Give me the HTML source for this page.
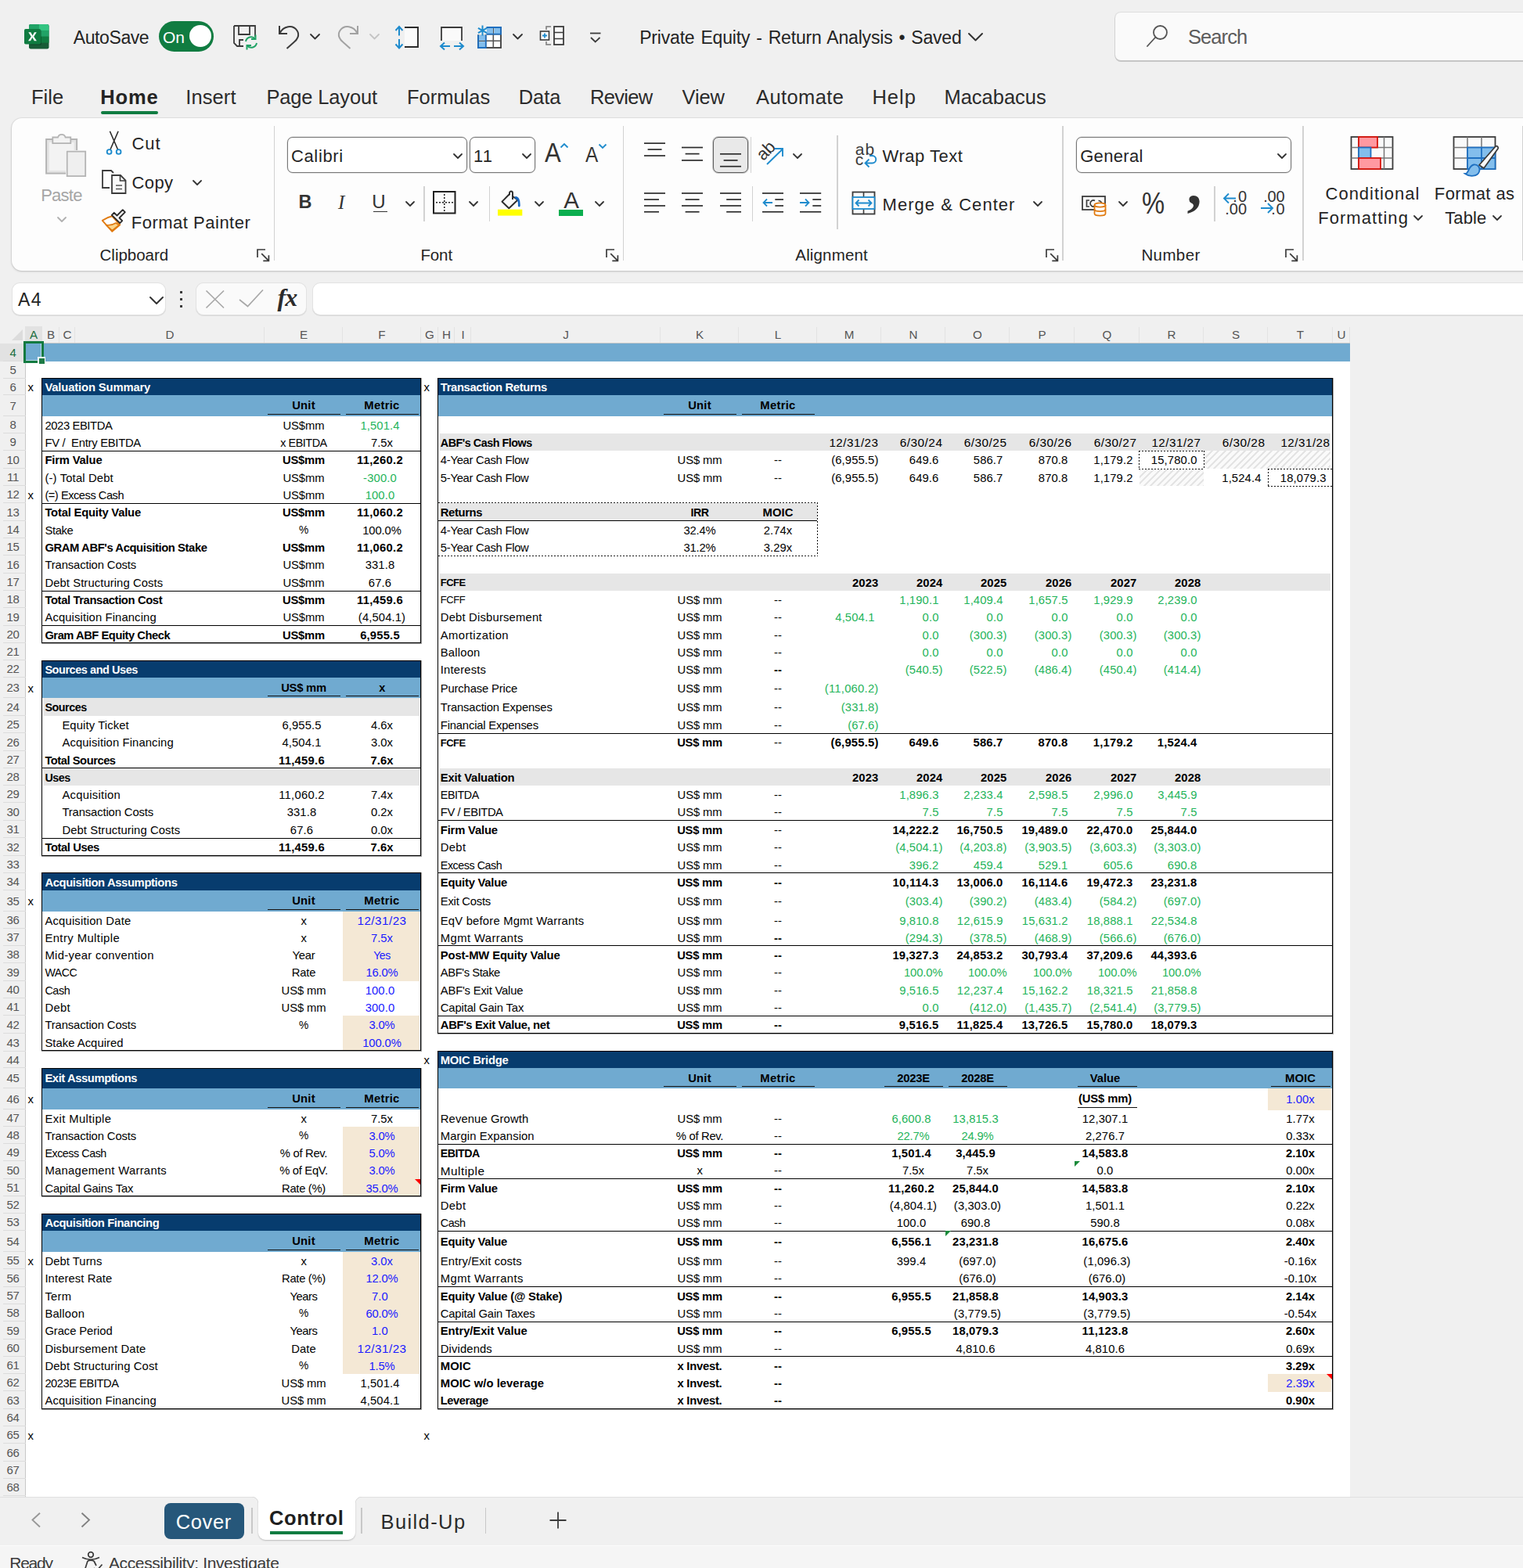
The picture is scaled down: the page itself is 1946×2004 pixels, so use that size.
<!DOCTYPE html>
<html lang="en"><head><meta charset="utf-8"><title>Private Equity - Return Analysis</title>
<style>
html,body{margin:0;padding:0;}
body{width:1946px;height:2004px;overflow:hidden;background:#f0f0f0;font-family:"Liberation Sans",sans-serif;}
#pg{position:relative;width:1946px;height:2004px;overflow:hidden;}
.a{position:absolute;}
.t{position:absolute;white-space:nowrap;}
.c{font-size:14.8px;color:#000;white-space:nowrap;box-sizing:border-box;overflow:visible;padding-top:1px;}
.l{text-align:left;padding-left:3.4px;}
.l2{text-align:left;padding-left:2.8px;}
.m{text-align:center;}
.r{text-align:right;padding-right:3.5px;}
.nc{text-align:center;}
.nc.p{padding-right:5px;}
.nr{text-align:right;padding-right:3.5px;}
.nr.p{padding-right:8.5px;}
.b{font-weight:bold;}
.w{color:#fff;padding-top:1px;}
.u{padding-top:0;}
.g{color:#1fb45a;}
.bl{color:#1a1aff;}
.u::after{content:"";position:absolute;left:3.5px;right:3.5px;bottom:2px;height:1.5px;background:#111;}
.fr{border:1.5px solid #111;box-sizing:border-box;}
.ch{top:417px;height:21px;line-height:21px;text-align:center;font-size:15.2px;color:#555;}
.rh{left:0;width:33px;text-align:center;box-sizing:border-box;font-size:15px;letter-spacing:-.4px;color:#555;}
.sel{color:#1b6e3f;}
.tri-r{width:0;height:0;border-top:7px solid #f00;border-left:7px solid transparent;}
.tri-g{width:0;height:0;border-top:7px solid #1a8a3a;border-right:7px solid transparent;}
</style></head>
<body><div id="pg">
<div class="a" style="left:0px;top:0px;width:1946px;height:408px;background:#f0f0f0;"></div><svg class="a" style="left:31px;top:31px" width="32" height="32" viewBox="0 0 32 32"><rect x="6" y="0" width="25.500" height="31.500" rx="2.200" fill="#185c37"/>
<path d="M8.200 0h10.300v7.900H6V2.200A2.200 2.200 0 0 1 8.200 0z" fill="#21a366"/><path d="M18.500 0h10.800a2.200 2.200 0 0 1 2.200 2.200v5.700h-13z" fill="#33c481"/>
<rect x="6" y="7.900" width="12.500" height="7.900" fill="#107c41"/><rect x="18.500" y="7.900" width="13" height="7.900" fill="#21a366"/>
<rect x="6" y="15.800" width="12.500" height="7.900" fill="#185c37"/><rect x="18.500" y="15.800" width="13" height="7.900" fill="#107c41"/>
<rect x="7" y="7" width="15" height="19.500" rx="1.500" fill="rgba(0,0,0,.22)"/>
<rect x="0" y="6" width="21" height="19.500" rx="1.800" fill="#107c41"/>
<path d="M5.300 10.300h3.100l2.200 4.200 2.300-4.200h2.900l-3.600 5.500 3.700 5.500h-3.100l-2.400-4.300-2.400 4.300H5l3.800-5.500z" fill="#fff"/></svg><div class="t" style="left:93.8px;top:36.5px;font-size:23px;line-height:23px;letter-spacing:-0.41px;color:#242424;">AutoSave</div><div class="a" style="left:203px;top:27px;width:70px;height:39px;background:#107c41;border-radius:20px;"></div><div class="a" style="left:242px;top:32px;width:28px;height:28px;background:#fff;border-radius:14px;"></div><div class="t" style="left:208.1px;top:37.2px;font-size:21px;line-height:21px;letter-spacing:-0.18px;color:#fff;">On</div><svg class="a" style="left:297px;top:31px" width="34" height="34" viewBox="0 0 34 34"><path d="M2 2h27v14M2 2v22l4 4h8" fill="none" stroke="#3b3b3b" stroke-width="1.8"/>
<path d="M8 2v11h14V2M9 28V20h5" fill="none" stroke="#3b3b3b" stroke-width="1.8"/>
<path d="M17 22a7 7 0 0 1 12-3.5M31 24a7 7 0 0 1-12 3.5" fill="none" stroke="#21a366" stroke-width="2"/>
<path d="M29.5 13.5v5.5h-5.5M18.500 32.500v-5.500h5.500" fill="none" stroke="#21a366" stroke-width="2"/></svg><svg class="a" style="left:354px;top:30px" width="32" height="34" viewBox="0 0 32 34"><path d="M3 3v10h10" fill="none" stroke="#3b3b3b" stroke-width="2"/><path d="M3.500 12.500C8 3 20 1 25.500 9c4 6 0 12-4 15l-9 8" fill="none" stroke="#3b3b3b" stroke-width="2"/></svg><svg class="a" style="left:395px;top:42.25px" width="15" height="9.5" viewBox="0 0 15 9.5"><path d="M2 2 L7.5 7.5 L13 2" fill="none" stroke="#333" stroke-width="1.8" stroke-linecap="round" stroke-linejoin="round"/></svg><svg class="a" style="left:428px;top:30px" width="32" height="34" viewBox="0 0 32 34"><path d="M29 3v10h-10" fill="none" stroke="#a2a2a2" stroke-width="2"/><path d="M28.500 12.500C24 3 12 1 6.500 9c-4 6 0 12 4 15l9 8" fill="none" stroke="#a2a2a2" stroke-width="2"/></svg><svg class="a" style="left:470.5px;top:42.25px" width="15" height="9.5" viewBox="0 0 15 9.5"><path d="M2 2 L7.5 7.5 L13 2" fill="none" stroke="#c4c4c4" stroke-width="1.8" stroke-linecap="round" stroke-linejoin="round"/></svg><svg class="a" style="left:503px;top:32px" width="34" height="32" viewBox="0 0 34 32"><path d="M14 3h17v25H14" fill="#fafafa" stroke="#2b2b2b" stroke-width="1.900"/>
<path d="M7 2v11.500M2.500 7l4.500-5 4.500 5M7 18v11.500M2.500 24.500l4.500 5 4.500-5" fill="none" stroke="#1e8bcd" stroke-width="2"/></svg><svg class="a" style="left:560px;top:32px" width="35" height="33" viewBox="0 0 35 33"><path d="M4 20V3h26v17" fill="#fafafa" stroke="#3b3b3b" stroke-width="1.8"/>
<path d="M3 27h12M20 27h12M8 22.500l-5 4.500 5 4.500M27 22.500l5 4.500-5 4.500" fill="none" stroke="#1e8bcd" stroke-width="2"/></svg><svg class="a" style="left:609px;top:31px" width="33" height="33" viewBox="0 0 33 33"><rect x="2" y="4" width="29" height="26" fill="#fff" stroke="#3b3b3b" stroke-width="1.800"/>
<path d="M2 12.700h29M2 21.300h29M11.700 4v26M21.300 4v26" stroke="#555" stroke-width="1.600"/>
<rect x="0" y="0" width="13" height="13.500" fill="#f0f0f0"/>
<rect x="13" y="4.800" width="8" height="7.500" fill="#83beec"/><rect x="22.300" y="4.800" width="8" height="7.500" fill="#83beec"/>
<path d="M12.500 4h18.500v8.700H12.500" fill="none" stroke="#1e6fc0" stroke-width="1.800"/>
<rect x="2.800" y="14" width="8" height="6.800" fill="#83beec"/><rect x="2.800" y="22.200" width="8" height="7" fill="#83beec"/>
<path d="M11.700 13.500V30H2V13.500" fill="none" stroke="#1e6fc0" stroke-width="1.800"/>
<path d="M7.500 1.500v13M1.900 4.800l11.200 6.400M13.100 4.800L1.900 11.200" stroke="#1e8bcd" stroke-width="2"/></svg><svg class="a" style="left:653.5px;top:42.25px" width="15" height="9.5" viewBox="0 0 15 9.5"><path d="M2 2 L7.5 7.5 L13 2" fill="none" stroke="#333" stroke-width="1.8" stroke-linecap="round" stroke-linejoin="round"/></svg><svg class="a" style="left:689px;top:32px" width="33" height="28" viewBox="0 0 33 28"><rect x="19" y="2" width="12" height="23" fill="#fafafa" stroke="#3b3b3b" stroke-width="1.8"/><path d="M19 9.500h12M19 17.500h12" stroke="#3b3b3b" stroke-width="1.6"/>
<path d="M15 2H9v4M15 25H9v-4" fill="none" stroke="#777" stroke-width="1.5"/>
<rect x="1.500" y="8" width="11" height="11" fill="#fafafa" stroke="#3b3b3b" stroke-width="1.6"/><path d="M7 10.500v6M4 13.500h6" stroke="#1e8bcd" stroke-width="1.8"/></svg><svg class="a" style="left:752px;top:40px" width="18" height="16" viewBox="0 0 18 16"><path d="M2 2.500h13.500" stroke="#3b3b3b" stroke-width="1.8"/><path d="M3 8l5.700 5.500L14.500 8" fill="none" stroke="#3b3b3b" stroke-width="1.8"/></svg><div class="t" style="left:817.2px;top:36.8px;font-size:23px;line-height:23px;letter-spacing:-0.19px;color:#242424;word-spacing:1.8px;">Private Equity - Return Analysis • Saved</div><svg class="a" style="left:1236px;top:40.75px" width="21" height="12.5" viewBox="0 0 21 12.5"><path d="M2 2 L10.5 10.5 L19 2" fill="none" stroke="#333" stroke-width="2" stroke-linecap="round" stroke-linejoin="round"/></svg><div class="a" style="left:1425px;top:16px;width:535px;height:61px;background:#fafafa;border-radius:7px;box-shadow:0 1.500px 0 0.500px #c6c6c6, 0 0 0 1px #dedede;"></div><svg class="a" style="left:1463px;top:30px" width="32" height="32" viewBox="0 0 32 32"><circle cx="19.500" cy="11.500" r="8.500" fill="none" stroke="#555" stroke-width="1.8"/><path d="M13.500 17.500L3 29" stroke="#555" stroke-width="1.8" stroke-linecap="round"/></svg><div class="t" style="left:1517.9px;top:34.8px;font-size:25.5px;line-height:25.5px;letter-spacing:-0.88px;color:#5c5c5c;">Search</div><div class="t" style="left:40.0px;top:111.8px;font-size:25.5px;line-height:25.5px;letter-spacing:-0.00px;color:#2b2b2b;">File</div><div class="t" style="left:128.3px;top:111.8px;font-size:25.5px;line-height:25.5px;letter-spacing:0.87px;color:#242424;font-weight:bold;">Home</div><div class="t" style="left:237.3px;top:111.8px;font-size:25.5px;line-height:25.5px;letter-spacing:0.08px;color:#2b2b2b;">Insert</div><div class="t" style="left:340.4px;top:111.8px;font-size:25.5px;line-height:25.5px;letter-spacing:-0.15px;color:#2b2b2b;">Page Layout</div><div class="t" style="left:520.0px;top:111.8px;font-size:25.5px;line-height:25.5px;letter-spacing:-0.01px;color:#2b2b2b;">Formulas</div><div class="t" style="left:662.7px;top:111.8px;font-size:25.5px;line-height:25.5px;letter-spacing:-0.04px;color:#2b2b2b;">Data</div><div class="t" style="left:753.9px;top:111.8px;font-size:25.5px;line-height:25.5px;letter-spacing:-0.67px;color:#2b2b2b;">Review</div><div class="t" style="left:871.5px;top:111.8px;font-size:25.5px;line-height:25.5px;letter-spacing:-0.13px;color:#2b2b2b;">View</div><div class="t" style="left:966.0px;top:111.8px;font-size:25.5px;line-height:25.5px;letter-spacing:0.41px;color:#2b2b2b;">Automate</div><div class="t" style="left:1114.4px;top:111.8px;font-size:25.5px;line-height:25.5px;letter-spacing:1.05px;color:#2b2b2b;">Help</div><div class="t" style="left:1206.5px;top:111.8px;font-size:25.5px;line-height:25.5px;letter-spacing:-0.03px;color:#2b2b2b;">Macabacus</div><div class="a" style="left:129.3px;top:142px;width:72.5px;height:3.5px;background:#107c41;border-radius:2px;"></div><div class="a" style="left:15px;top:151px;width:1955px;height:194.5px;background:#fdfdfd;border-radius:13px;box-shadow:0 1px 3px rgba(0,0,0,.18),0 0 0 1px #e4e4e4;"></div><svg class="a" style="left:57px;top:168px" width="56" height="60" viewBox="0 0 56 60"><rect x="2.100" y="10" width="39" height="43.600" fill="#e4e4e4" stroke="#b4b4b4" stroke-width="2"/>
<rect x="6" y="14" width="31.500" height="36" fill="#f3f3f3"/>
<path d="M10.300 15.200V7.500h6.700a5 5 0 0 1 9.600 0h6.700v7.700z" fill="#f3f3f3" stroke="#b4b4b4" stroke-width="1.800"/>
<rect x="27.100" y="24" width="26" height="34" fill="#fdfdfd"/>
<rect x="28.700" y="25.600" width="23.500" height="31.500" fill="#efefef" stroke="#b4b4b4" stroke-width="1.800"/></svg><div class="t" style="left:52.2px;top:239.2px;font-size:22px;line-height:22px;letter-spacing:-0.77px;color:#a6a6a6;">Paste</div><svg class="a" style="left:71.5px;top:275.5px" width="14" height="9" viewBox="0 0 14 9"><path d="M2 2 L7 7 L12 2" fill="none" stroke="#b0b0b0" stroke-width="1.8" stroke-linecap="round" stroke-linejoin="round"/></svg><svg class="a" style="left:134px;top:166px" width="24" height="34" viewBox="0 0 24 34"><path d="M6.400 1.800L16.600 25.200M17.100 1.800L6.900 25.200" stroke="#2b2b2b" stroke-width="1.600" fill="none"/>
<circle cx="5.600" cy="28" r="2.900" fill="#fdfdfd" stroke="#1e8bcd" stroke-width="1.900"/><circle cx="17.600" cy="28" r="2.900" fill="#fdfdfd" stroke="#1e8bcd" stroke-width="1.900"/></svg><div class="t" style="left:168.5px;top:173.0px;font-size:22px;line-height:22px;letter-spacing:0.91px;color:#242424;">Cut</div><svg class="a" style="left:129px;top:216px" width="34" height="34" viewBox="0 0 34 34"><path d="M11 24H2V2h11l3 3" fill="none" stroke="#3b3b3b" stroke-width="1.8"/>
<path d="M14 8h11l6.500 6.500V31H14z" fill="#fafafa" stroke="#3b3b3b" stroke-width="1.8"/><path d="M24.500 8v7h7" fill="none" stroke="#3b3b3b" stroke-width="1.6"/>
<path d="M19 21h8M19 25.500h8" stroke="#555" stroke-width="1.6"/></svg><div class="t" style="left:168.5px;top:223.3px;font-size:22px;line-height:22px;letter-spacing:0.38px;color:#242424;">Copy</div><svg class="a" style="left:245px;top:229.2px" width="14" height="9" viewBox="0 0 14 9"><path d="M2 2 L7 7 L12 2" fill="none" stroke="#333" stroke-width="1.8" stroke-linecap="round" stroke-linejoin="round"/></svg><svg class="a" style="left:129px;top:266px" width="34" height="32" viewBox="0 0 34 32"><path d="M14.300 10.300C9 11.500 5 13.500 1.800 15.800L14.300 29.900 24.300 21.300z" fill="#fff" stroke="#e07a10" stroke-width="1.900" stroke-linejoin="round"/>
<path d="M6.500 21.500c4 0.800 8 0.200 12.500-2.500l4 2.500-8.700 7z" fill="#fbd58b" stroke="#e07a10" stroke-width="1.500" stroke-linejoin="round"/>
<path d="M13.800 8.800l3-3 3.700 3.700 7.300-7.300 3 3-7.300 7.300 3.700 3.700-3 3z" fill="#fff" stroke="#2b2b2b" stroke-width="1.900" stroke-linejoin="round"/></svg><div class="t" style="left:167.8px;top:273.9px;font-size:22px;line-height:22px;letter-spacing:0.50px;color:#242424;">Format Painter</div><div class="t" style="left:127.6px;top:315.9px;font-size:20.5px;line-height:20.5px;letter-spacing:-0.03px;color:#242424;">Clipboard</div><svg class="a" style="left:328px;top:318px" width="17" height="17" viewBox="0 0 17 17"><path d="M1 11V1h10" fill="none" stroke="#3b3b3b" stroke-width="1.7"/><path d="M6.2 6.2l9 9M8.3 15.400h7.100V8.300" fill="none" stroke="#3b3b3b" stroke-width="1.7"/></svg><div class="a" style="left:349.65px;top:161px;width:1.5px;height:172px;background:#d2d2d2;"></div><div class="a" style="left:367px;top:175px;width:230px;height:45.5px;border:1px solid #777;box-shadow:0 0 0 .5px rgba(120,120,120,.35);border-radius:7px;box-sizing:border-box;background:#fff;"></div><div class="t" style="left:371.9px;top:188.9px;font-size:22px;line-height:22px;letter-spacing:0.67px;color:#242424;">Calibri</div><svg class="a" style="left:577.7px;top:194.5px" width="14" height="9" viewBox="0 0 14 9"><path d="M2 2 L7 7 L12 2" fill="none" stroke="#333" stroke-width="1.8" stroke-linecap="round" stroke-linejoin="round"/></svg><div class="a" style="left:600px;top:175px;width:84px;height:45.5px;border:1px solid #777;box-shadow:0 0 0 .5px rgba(120,120,120,.35);border-radius:7px;box-sizing:border-box;background:#fff;"></div><div class="t" style="left:605.0px;top:188.9px;font-size:22px;line-height:22px;letter-spacing:1.03px;color:#242424;">11</div><svg class="a" style="left:665.5px;top:194.5px" width="14" height="9" viewBox="0 0 14 9"><path d="M2 2 L7 7 L12 2" fill="none" stroke="#333" stroke-width="1.8" stroke-linecap="round" stroke-linejoin="round"/></svg><div class="t" style="left:696.3px;top:178.2px;font-size:34.5px;line-height:34.5px;color:#333;transform:scaleX(.9);transform-origin:0 0;">A</div><svg class="a" style="left:715px;top:182.3px" width="12" height="8" viewBox="0 0 12 8"><path d="M1.500 6.500L6 2l4.500 4.500" fill="none" stroke="#1e8bcd" stroke-width="1.8"/></svg><div class="t" style="left:748px;top:184.5px;font-size:27px;line-height:27px;color:#333;transform:scaleX(.9);transform-origin:0 0;">A</div><svg class="a" style="left:763.5px;top:183.3px" width="12" height="8" viewBox="0 0 12 8"><path d="M1.500 1.500L6 6l4.500-4.500" fill="none" stroke="#1e8bcd" stroke-width="1.8"/></svg><div class="t" style="left:381.5px;top:247.1px;font-size:23.5px;line-height:23.5px;letter-spacing:0.00px;color:#333;font-weight:bold;">B</div><div class="t" style="left:432.0px;top:245.8px;font-size:25px;line-height:25px;letter-spacing:0.00px;color:#333;font-style:italic;font-family:'Liberation Serif',serif;">I</div><div class="t" style="left:475.2px;top:245.7px;font-size:24px;line-height:24px;letter-spacing:0.00px;color:#333;">U</div><div class="a" style="left:477px;top:269.8px;width:17.7px;height:1.7px;background:#333;"></div><svg class="a" style="left:516.5px;top:256px" width="14" height="9" viewBox="0 0 14 9"><path d="M2 2 L7 7 L12 2" fill="none" stroke="#333" stroke-width="1.8" stroke-linecap="round" stroke-linejoin="round"/></svg><div class="a" style="left:541.45px;top:237.5px;width:1.5px;height:45.5px;background:#d2d2d2;"></div><svg class="a" style="left:552px;top:243px" width="32" height="32" viewBox="0 0 32 32"><rect x="2" y="2" width="27.500" height="27.500" fill="#fafafa" stroke="#1f1f1f" stroke-width="2"/>
<path d="M15.750 5v22M5 15.750h22" stroke="#1f1f1f" stroke-width="1.500" stroke-dasharray="2 2"/></svg><svg class="a" style="left:598px;top:256px" width="14" height="9" viewBox="0 0 14 9"><path d="M2 2 L7 7 L12 2" fill="none" stroke="#333" stroke-width="1.8" stroke-linecap="round" stroke-linejoin="round"/></svg><div class="a" style="left:624.95px;top:237.5px;width:1.5px;height:45.5px;background:#d2d2d2;"></div><svg class="a" style="left:634px;top:243px" width="36" height="34" viewBox="0 0 36 34"><path d="M7.500 14.700L17 5l10.500 7.500L16.300 23.300z" fill="#fafafa" stroke="#2b2b2b" stroke-width="1.900" stroke-linejoin="round"/>
<path d="M17 6V3.500a2 2 0 0 1 4 0V12" fill="#fafafa" stroke="#2b2b2b" stroke-width="1.900"/>
<path d="M25 9.500c3.500 0.500 4.500 4 4.300 10.500" fill="none" stroke="#1767c2" stroke-width="2.800" stroke-linecap="round"/>
<rect x="2" y="24.700" width="31.300" height="7.900" fill="#ffff00"/></svg><svg class="a" style="left:681.5px;top:256px" width="14" height="9" viewBox="0 0 14 9"><path d="M2 2 L7 7 L12 2" fill="none" stroke="#333" stroke-width="1.8" stroke-linecap="round" stroke-linejoin="round"/></svg><div class="t" style="left:720.3px;top:240.8px;font-size:29.5px;line-height:29.5px;letter-spacing:0.00px;color:#333;">A</div><div class="a" style="left:714px;top:268px;width:31px;height:7.6px;background:#0bae4f;"></div><svg class="a" style="left:759.3px;top:256px" width="14" height="9" viewBox="0 0 14 9"><path d="M2 2 L7 7 L12 2" fill="none" stroke="#333" stroke-width="1.8" stroke-linecap="round" stroke-linejoin="round"/></svg><div class="t" style="left:537.4px;top:315.6px;font-size:20.5px;line-height:20.5px;letter-spacing:-0.11px;color:#242424;">Font</div><svg class="a" style="left:774px;top:318px" width="17" height="17" viewBox="0 0 17 17"><path d="M1 11V1h10" fill="none" stroke="#3b3b3b" stroke-width="1.7"/><path d="M6.2 6.2l9 9M8.3 15.400h7.100V8.300" fill="none" stroke="#3b3b3b" stroke-width="1.7"/></svg><div class="a" style="left:795.95px;top:161px;width:1.5px;height:172px;background:#d2d2d2;"></div><svg class="a" style="left:822.6px;top:150px" width="27.2" height="130" viewBox="0 0 27.2 130"><path d="M0 33.1H27.2" stroke="#2b2b2b" stroke-width="1.7"/><path d="M4.624 41H22.576" stroke="#2b2b2b" stroke-width="1.7"/><path d="M0 49H27.2" stroke="#2b2b2b" stroke-width="1.7"/></svg><svg class="a" style="left:871px;top:150px" width="27.2" height="130" viewBox="0 0 27.2 130"><path d="M0 38.5H27.2" stroke="#2b2b2b" stroke-width="1.7"/><path d="M4.624 46.6H22.576" stroke="#2b2b2b" stroke-width="1.7"/><path d="M0 54.9H27.2" stroke="#2b2b2b" stroke-width="1.7"/></svg><div class="a" style="left:910.6px;top:175px;width:45.4px;height:45.5px;border:1px solid #5e5e5e;box-shadow:0 0 0 1px rgba(90,90,90,.28);border-radius:7px;box-sizing:border-box;background:#e9e9e9;"></div><svg class="a" style="left:919.6px;top:150px" width="27.2" height="130" viewBox="0 0 27.2 130"><path d="M0 46.8H27.2" stroke="#2b2b2b" stroke-width="1.7"/><path d="M4.624 54.9H22.576" stroke="#2b2b2b" stroke-width="1.7"/><path d="M0 62.7H27.2" stroke="#2b2b2b" stroke-width="1.7"/></svg><div class="a" style="left:958.75px;top:175px;width:1.5px;height:45.5px;background:#d2d2d2;"></div><svg class="a" style="left:968px;top:180px" width="36" height="34" viewBox="0 0 36 34"><path d="M12 30L31.500 11M22 10h10v10" fill="none" stroke="#1e8bcd" stroke-width="1.900"/></svg><div class="t" style="left:967.5px;top:182.5px;font-size:22px;line-height:22px;color:#333;transform:rotate(-45deg);transform-origin:0 100%;letter-spacing:-0.5px;margin-left:10px;margin-top:4px">ab</div><svg class="a" style="left:1011.7px;top:194.5px" width="14" height="9" viewBox="0 0 14 9"><path d="M2 2 L7 7 L12 2" fill="none" stroke="#333" stroke-width="1.8" stroke-linecap="round" stroke-linejoin="round"/></svg><div class="a" style="left:1069.45px;top:173px;width:1.5px;height:119.6px;background:#d2d2d2;"></div><div class="t" style="left:1092.7px;top:179.5px;font-size:21px;line-height:21px;letter-spacing:1.25px;color:#3b3b3b;">ab</div><div class="t" style="left:1092.7px;top:193.2px;font-size:21px;line-height:21px;letter-spacing:0.00px;color:#3b3b3b;">c</div><svg class="a" style="left:1103px;top:198px" width="18" height="18" viewBox="0 0 18 18"><path d="M8 1h3.500a4.500 4.500 0 0 1 0 9.500H3M7.500 5.500L2.500 10.500l5 5" fill="none" stroke="#1e8bcd" stroke-width="1.900"/></svg><div class="t" style="left:1127.6px;top:188.9px;font-size:22px;line-height:22px;letter-spacing:0.50px;color:#242424;">Wrap Text</div><svg class="a" style="left:822.6px;top:150px" width="27.2" height="130" viewBox="0 0 27.2 130"><path d="M0 97H27.2" stroke="#2b2b2b" stroke-width="1.7"/><path d="M0 105H19.04" stroke="#2b2b2b" stroke-width="1.7"/><path d="M0 113H27.2" stroke="#2b2b2b" stroke-width="1.7"/><path d="M0 120.8H19.04" stroke="#2b2b2b" stroke-width="1.7"/></svg><svg class="a" style="left:871px;top:150px" width="27.2" height="130" viewBox="0 0 27.2 130"><path d="M0 97H27.2" stroke="#2b2b2b" stroke-width="1.7"/><path d="M4.624 105H22.576" stroke="#2b2b2b" stroke-width="1.7"/><path d="M0 113H27.2" stroke="#2b2b2b" stroke-width="1.7"/><path d="M4.624 120.8H22.576" stroke="#2b2b2b" stroke-width="1.7"/></svg><svg class="a" style="left:919.6px;top:150px" width="27.2" height="130" viewBox="0 0 27.2 130"><path d="M0 97H27.2" stroke="#2b2b2b" stroke-width="1.7"/><path d="M8.16 105H27.2" stroke="#2b2b2b" stroke-width="1.7"/><path d="M0 113H27.2" stroke="#2b2b2b" stroke-width="1.7"/><path d="M8.16 120.8H27.2" stroke="#2b2b2b" stroke-width="1.7"/></svg><div class="a" style="left:960.65px;top:237.5px;width:1.5px;height:45.5px;background:#d2d2d2;"></div><svg class="a" style="left:974px;top:150px" width="27.2" height="130" viewBox="0 0 27.2 130"><path d="M0 97H27.2" stroke="#2b2b2b" stroke-width="1.7"/><path d="M16.32 105H27.2" stroke="#2b2b2b" stroke-width="1.7"/><path d="M16.32 113H27.2" stroke="#2b2b2b" stroke-width="1.7"/><path d="M0 120.8H27.2" stroke="#2b2b2b" stroke-width="1.7"/></svg><svg class="a" style="left:974px;top:253px" width="14" height="12" viewBox="0 0 14 12"><path d="M13 6H1.500M6 1.500L1.500 6l4.500 4.500" fill="none" stroke="#1e8bcd" stroke-width="1.800"/></svg><svg class="a" style="left:1022.4px;top:150px" width="27.2" height="130" viewBox="0 0 27.2 130"><path d="M0 97H27.2" stroke="#2b2b2b" stroke-width="1.7"/><path d="M16.32 105H27.2" stroke="#2b2b2b" stroke-width="1.7"/><path d="M16.32 113H27.2" stroke="#2b2b2b" stroke-width="1.7"/><path d="M0 120.8H27.2" stroke="#2b2b2b" stroke-width="1.7"/></svg><svg class="a" style="left:1022.4px;top:253px" width="14" height="12" viewBox="0 0 14 12"><path d="M0 6h11.500M7 1.500l4.500 4.500-4.500 4.500" fill="none" stroke="#1e8bcd" stroke-width="1.800"/></svg><svg class="a" style="left:1087.6px;top:243.6px" width="31" height="31" viewBox="0 0 31 31"><rect x="1.500" y="1.500" width="28" height="28" fill="#fafafa" stroke="#3b3b3b" stroke-width="1.800"/><path d="M15.500 1.500v28" stroke="#3b3b3b" stroke-width="1.600"/>
<rect x="1.500" y="8" width="28" height="15" fill="#fafafa" stroke="#1e8bcd" stroke-width="1.800"/><path d="M5.500 15.500h20M9.500 11.500l-4 4 4 4M21.500 11.500l4 4-4 4" fill="none" stroke="#1e8bcd" stroke-width="1.800"/></svg><div class="t" style="left:1127.5px;top:250.9px;font-size:22px;line-height:22px;letter-spacing:1.05px;color:#242424;">Merge &amp; Center</div><svg class="a" style="left:1319.3px;top:256px" width="14" height="9" viewBox="0 0 14 9"><path d="M2 2 L7 7 L12 2" fill="none" stroke="#333" stroke-width="1.8" stroke-linecap="round" stroke-linejoin="round"/></svg><div class="t" style="left:1016.3px;top:315.6px;font-size:20.5px;line-height:20.5px;letter-spacing:0.16px;color:#242424;">Alignment</div><svg class="a" style="left:1336px;top:318px" width="17" height="17" viewBox="0 0 17 17"><path d="M1 11V1h10" fill="none" stroke="#3b3b3b" stroke-width="1.7"/><path d="M6.2 6.2l9 9M8.3 15.400h7.100V8.300" fill="none" stroke="#3b3b3b" stroke-width="1.7"/></svg><div class="a" style="left:1357.45px;top:161px;width:1.5px;height:172px;background:#d2d2d2;"></div><div class="a" style="left:1375px;top:175px;width:275px;height:45.5px;border:1px solid #777;box-shadow:0 0 0 .5px rgba(120,120,120,.35);border-radius:7px;box-sizing:border-box;background:#fff;"></div><div class="t" style="left:1380.2px;top:188.9px;font-size:22px;line-height:22px;letter-spacing:0.32px;color:#242424;">General</div><svg class="a" style="left:1630.5px;top:194.5px" width="14" height="9" viewBox="0 0 14 9"><path d="M2 2 L7 7 L12 2" fill="none" stroke="#333" stroke-width="1.8" stroke-linecap="round" stroke-linejoin="round"/></svg><svg class="a" style="left:1381px;top:248px" width="36" height="30" viewBox="0 0 36 30"><rect x="2" y="3" width="29" height="17" fill="#fafafa" stroke="#3b3b3b" stroke-width="1.800"/>
<path d="M11 8H7.500v8H11M18 8.500a4 4 0 1 0 0 7M22.500 8.500a4 4 0 0 1 4 3" fill="none" stroke="#3b3b3b" stroke-width="1.700"/>
<path d="M17.500 14v11c0 3.500 14 3.500 14 0V14" fill="#fff" stroke="#e07a10" stroke-width="1.800"/><ellipse cx="24.500" cy="14" rx="7" ry="2.700" fill="#fff" stroke="#e07a10" stroke-width="1.800"/>
<path d="M17.500 19.500c0 3.500 14 3.500 14 0" fill="none" stroke="#e07a10" stroke-width="1.800"/></svg><svg class="a" style="left:1427.7px;top:256px" width="14" height="9" viewBox="0 0 14 9"><path d="M2 2 L7 7 L12 2" fill="none" stroke="#333" stroke-width="1.8" stroke-linecap="round" stroke-linejoin="round"/></svg><div class="t" style="left:1459px;top:240px;font-size:39px;line-height:39px;color:#333;transform:scaleX(.84);transform-origin:0 0;">%</div><div class="t" style="left:1516.5px;top:196.5px;font-size:76px;line-height:76px;color:#333;font-family:'Liberation Serif',serif;font-weight:bold;">,</div><div class="a" style="left:1551.25px;top:237.5px;width:1.5px;height:45.5px;background:#d2d2d2;"></div><svg class="a" style="left:1562px;top:244px" width="32" height="32" viewBox="0 0 32 32"><path d="M2 9.500h15M8 3.500L2 9.500l6 6" fill="none" stroke="#1e8bcd" stroke-width="1.900"/></svg><div class="t" style="left:1575.2px;top:241.1px;font-size:20px;line-height:20px;letter-spacing:1.34px;color:#333;">.0</div><div class="t" style="left:1565.2px;top:256.6px;font-size:20px;line-height:20px;letter-spacing:0.11px;color:#333;">.00</div><div class="t" style="left:1614.2px;top:241.1px;font-size:20px;line-height:20px;letter-spacing:-0.14px;color:#333;">.00</div><div class="t" style="left:1624.2px;top:256.6px;font-size:20px;line-height:20px;letter-spacing:0.84px;color:#333;">.0</div><svg class="a" style="left:1610px;top:258px" width="22" height="16" viewBox="0 0 22 16"><path d="M1 8h15M10 2l6 6-6 6" fill="none" stroke="#1e8bcd" stroke-width="1.900"/></svg><div class="t" style="left:1458.4px;top:315.6px;font-size:20.5px;line-height:20.5px;letter-spacing:0.40px;color:#242424;">Number</div><svg class="a" style="left:1642px;top:318px" width="17" height="17" viewBox="0 0 17 17"><path d="M1 11V1h10" fill="none" stroke="#3b3b3b" stroke-width="1.7"/><path d="M6.2 6.2l9 9M8.3 15.400h7.100V8.300" fill="none" stroke="#3b3b3b" stroke-width="1.7"/></svg><div class="a" style="left:1664.25px;top:161px;width:1.5px;height:172px;background:#d2d2d2;"></div><svg class="a" style="left:1725px;top:173px" width="56" height="45" viewBox="0 0 56 45"><rect x="1.500" y="2" width="53" height="41" fill="#fafafa" stroke="#3b3b3b" stroke-width="1.800"/>
<path d="M1.500 15.500h53M1.500 29h53M11 2v41M43.500 2v41" stroke="#777" stroke-width="1.500"/>
<rect x="11" y="2" width="24" height="13.500" fill="#ff99a1" stroke="#d8140c" stroke-width="1.800"/>
<rect x="11" y="15.500" width="15.500" height="13.500" fill="#83beec" stroke="#1e6fc0" stroke-width="1.800"/>
<rect x="11" y="29" width="28" height="14" fill="#ff99a1" stroke="#d8140c" stroke-width="1.800"/></svg><div class="t" style="left:1693.6px;top:237.2px;font-size:22px;line-height:22px;letter-spacing:0.97px;color:#242424;">Conditional</div><div class="t" style="left:1684.2px;top:268.4px;font-size:22px;line-height:22px;letter-spacing:1.06px;color:#242424;">Formatting</div><svg class="a" style="left:1805.4px;top:274px" width="14" height="9" viewBox="0 0 14 9"><path d="M2 2 L7 7 L12 2" fill="none" stroke="#333" stroke-width="1.8" stroke-linecap="round" stroke-linejoin="round"/></svg><svg class="a" style="left:1856px;top:173px" width="62" height="56" viewBox="0 0 62 56"><rect x="1.500" y="2" width="53" height="41" fill="#fafafa" stroke="#3b3b3b" stroke-width="1.800"/>
<path d="M1.500 15.500h53M1.500 29h53M19 2v41M37 2v41" stroke="#777" stroke-width="1.500"/>
<rect x="19" y="15.500" width="35.500" height="27.500" fill="#83beec" stroke="#1e6fc0" stroke-width="1.800"/><path d="M19 29h35M37 15.500v27" stroke="#1e6fc0" stroke-width="1.800"/>
<path d="M55 14c2-1 4 1 3 3L40 42l-6-4z" fill="#fafafa" stroke="#3b3b3b" stroke-width="1.800" stroke-linejoin="round"/>
<path d="M16 49c5 0 4-10 11-11.500 5-1 9 4 7 9-2 6-12 7-18 2.500z" fill="#83beec" stroke="#1e6fc0" stroke-width="1.800"/></svg><div class="t" style="left:1832.8px;top:237.2px;font-size:22px;line-height:22px;letter-spacing:0.40px;color:#242424;">Format as</div><div class="t" style="left:1846.2px;top:268.4px;font-size:22px;line-height:22px;letter-spacing:0.14px;color:#242424;">Table</div><svg class="a" style="left:1906px;top:274px" width="14" height="9" viewBox="0 0 14 9"><path d="M2 2 L7 7 L12 2" fill="none" stroke="#333" stroke-width="1.8" stroke-linecap="round" stroke-linejoin="round"/></svg><div class="a" style="left:1944.75px;top:161px;width:1.5px;height:172px;background:#d2d2d2;"></div><div class="a" style="left:16px;top:362px;width:195px;height:40px;background:#fff;border-radius:9px;box-shadow:0 0 0 1px #e2e2e2,0 1px 0 1px #dadada;"></div><div class="t" style="left:23.0px;top:372.0px;font-size:23px;line-height:23px;letter-spacing:1.47px;color:#242424;">A4</div><svg class="a" style="left:190.4px;top:378px" width="20" height="12" viewBox="0 0 20 12"><path d="M2 2 L10 10 L18 2" fill="none" stroke="#333" stroke-width="2" stroke-linecap="round" stroke-linejoin="round"/></svg><div class="a" style="left:229.5px;top:371.5px;width:3.5px;height:3.5px;background:#3b3b3b;"></div><div class="a" style="left:229.5px;top:380.8px;width:3.5px;height:3.5px;background:#3b3b3b;"></div><div class="a" style="left:229.5px;top:389.8px;width:3.5px;height:3.5px;background:#3b3b3b;"></div><div class="a" style="left:250.6px;top:362px;width:140.7px;height:40px;background:#fafafa;border-radius:9px;box-shadow:0 0 0 1px #e2e2e2,0 1px 0 1px #dadada;"></div><svg class="a" style="left:262px;top:369.5px" width="26" height="25" viewBox="0 0 26 25"><path d="M1.500 1.500l22.500 22M24 1.500L1.500 23.500" stroke="#a8a8a8" stroke-width="1.700"/></svg><svg class="a" style="left:304px;top:369px" width="34" height="24" viewBox="0 0 34 24"><path d="M2 14l10.500 8.500L32 1.500" fill="none" stroke="#a8a8a8" stroke-width="1.700"/></svg><div class="t" style="left:354.5px;top:364px;font-size:32px;line-height:32px;color:#2b2b2b;font-family:'Liberation Serif',serif;font-style:italic;font-weight:bold;letter-spacing:-1px">fx</div><div class="a" style="left:400px;top:362px;width:1570px;height:40px;background:#fff;border-radius:9px;box-shadow:0 0 0 1px #e2e2e2,0 1px 0 1px #dadada;"></div>
<div class="a" style="left:0px;top:408px;width:1946px;height:31px;background:#f0f0f0;"></div>
<div class="a" style="left:1725px;top:439px;width:221px;height:1474px;background:#f0f0f0;"></div>
<div class="a" style="left:0px;top:439px;width:33px;height:1474px;background:#f0f0f0;border-right:1px solid #c8c8c8;box-sizing:border-box;"></div>
<div class="a" style="left:32px;top:417px;width:22px;height:22px;background:#e2e2e2;"></div>
<div class="a" style="left:0px;top:439px;width:33px;height:23px;background:#e2e2e2;"></div>
<div class="a ch sel" style="left:32px;width:22px;">A</div>
<div class="a" style="left:53px;top:418px;width:1px;height:20px;background:#e3e3e3;"></div>
<div class="a ch" style="left:54px;width:22px;">B</div>
<div class="a" style="left:75px;top:418px;width:1px;height:20px;background:#e3e3e3;"></div>
<div class="a ch" style="left:76px;width:20px;">C</div>
<div class="a" style="left:95px;top:418px;width:1px;height:20px;background:#e3e3e3;"></div>
<div class="a ch" style="left:96px;width:242px;">D</div>
<div class="a" style="left:337px;top:418px;width:1px;height:20px;background:#e3e3e3;"></div>
<div class="a ch" style="left:338px;width:100px;">E</div>
<div class="a" style="left:437px;top:418px;width:1px;height:20px;background:#e3e3e3;"></div>
<div class="a ch" style="left:438px;width:100px;">F</div>
<div class="a" style="left:537px;top:418px;width:1px;height:20px;background:#e3e3e3;"></div>
<div class="a ch" style="left:538px;width:22px;">G</div>
<div class="a" style="left:559px;top:418px;width:1px;height:20px;background:#e3e3e3;"></div>
<div class="a ch" style="left:560px;width:21px;">H</div>
<div class="a" style="left:580px;top:418px;width:1px;height:20px;background:#e3e3e3;"></div>
<div class="a ch" style="left:581px;width:21px;">I</div>
<div class="a" style="left:601px;top:418px;width:1px;height:20px;background:#e3e3e3;"></div>
<div class="a ch" style="left:602px;width:242px;">J</div>
<div class="a" style="left:843px;top:418px;width:1px;height:20px;background:#e3e3e3;"></div>
<div class="a ch" style="left:844px;width:100px;">K</div>
<div class="a" style="left:943px;top:418px;width:1px;height:20px;background:#e3e3e3;"></div>
<div class="a ch" style="left:944px;width:100px;">L</div>
<div class="a" style="left:1043px;top:418px;width:1px;height:20px;background:#e3e3e3;"></div>
<div class="a ch" style="left:1044px;width:82px;">M</div>
<div class="a" style="left:1125px;top:418px;width:1px;height:20px;background:#e3e3e3;"></div>
<div class="a ch" style="left:1126px;width:82px;">N</div>
<div class="a" style="left:1207px;top:418px;width:1px;height:20px;background:#e3e3e3;"></div>
<div class="a ch" style="left:1208px;width:82px;">O</div>
<div class="a" style="left:1289px;top:418px;width:1px;height:20px;background:#e3e3e3;"></div>
<div class="a ch" style="left:1290px;width:83px;">P</div>
<div class="a" style="left:1372px;top:418px;width:1px;height:20px;background:#e3e3e3;"></div>
<div class="a ch" style="left:1373px;width:83px;">Q</div>
<div class="a" style="left:1455px;top:418px;width:1px;height:20px;background:#e3e3e3;"></div>
<div class="a ch" style="left:1456px;width:82px;">R</div>
<div class="a" style="left:1537px;top:418px;width:1px;height:20px;background:#e3e3e3;"></div>
<div class="a ch" style="left:1538px;width:82px;">S</div>
<div class="a" style="left:1619px;top:418px;width:1px;height:20px;background:#e3e3e3;"></div>
<div class="a ch" style="left:1620px;width:83px;">T</div>
<div class="a" style="left:1702px;top:418px;width:1px;height:20px;background:#e3e3e3;"></div>
<div class="a ch" style="left:1703px;width:22px;">U</div>
<div class="a" style="left:1724px;top:418px;width:1px;height:20px;background:#e3e3e3;"></div>
<div class="a" style="left:33px;top:438px;width:1692px;height:1px;background:#c8c8c8;"></div>
<div class="a rh sel" style="top:439px;height:23px;line-height:23px;">4</div>
<div class="a" style="left:4px;top:461px;width:29px;height:1px;background:#dcdcdc;"></div>
<div class="a rh" style="top:462px;height:22px;line-height:22px;">5</div>
<div class="a" style="left:4px;top:483px;width:29px;height:1px;background:#dcdcdc;"></div>
<div class="a rh" style="top:484px;height:21px;line-height:21px;">6</div>
<div class="a" style="left:4px;top:504px;width:29px;height:1px;background:#dcdcdc;"></div>
<div class="a rh" style="top:505px;height:27px;line-height:27px;">7</div>
<div class="a" style="left:4px;top:531px;width:29px;height:1px;background:#dcdcdc;"></div>
<div class="a rh" style="top:532px;height:22px;line-height:22px;">8</div>
<div class="a" style="left:4px;top:553px;width:29px;height:1px;background:#dcdcdc;"></div>
<div class="a rh" style="top:554px;height:22px;line-height:22px;">9</div>
<div class="a" style="left:4px;top:575px;width:29px;height:1px;background:#dcdcdc;"></div>
<div class="a rh" style="top:576px;height:23px;line-height:23px;">10</div>
<div class="a" style="left:4px;top:598px;width:29px;height:1px;background:#dcdcdc;"></div>
<div class="a rh" style="top:599px;height:22px;line-height:22px;">11</div>
<div class="a" style="left:4px;top:620px;width:29px;height:1px;background:#dcdcdc;"></div>
<div class="a rh" style="top:621px;height:22px;line-height:22px;">12</div>
<div class="a" style="left:4px;top:642px;width:29px;height:1px;background:#dcdcdc;"></div>
<div class="a rh" style="top:643px;height:23px;line-height:23px;">13</div>
<div class="a" style="left:4px;top:665px;width:29px;height:1px;background:#dcdcdc;"></div>
<div class="a rh" style="top:666px;height:22px;line-height:22px;">14</div>
<div class="a" style="left:4px;top:687px;width:29px;height:1px;background:#dcdcdc;"></div>
<div class="a rh" style="top:688px;height:22px;line-height:22px;">15</div>
<div class="a" style="left:4px;top:709px;width:29px;height:1px;background:#dcdcdc;"></div>
<div class="a rh" style="top:710px;height:23px;line-height:23px;">16</div>
<div class="a" style="left:4px;top:732px;width:29px;height:1px;background:#dcdcdc;"></div>
<div class="a rh" style="top:733px;height:22px;line-height:22px;">17</div>
<div class="a" style="left:4px;top:754px;width:29px;height:1px;background:#dcdcdc;"></div>
<div class="a rh" style="top:755px;height:22px;line-height:22px;">18</div>
<div class="a" style="left:4px;top:776px;width:29px;height:1px;background:#dcdcdc;"></div>
<div class="a rh" style="top:777px;height:23px;line-height:23px;">19</div>
<div class="a" style="left:4px;top:799px;width:29px;height:1px;background:#dcdcdc;"></div>
<div class="a rh" style="top:800px;height:22px;line-height:22px;">20</div>
<div class="a" style="left:4px;top:821px;width:29px;height:1px;background:#dcdcdc;"></div>
<div class="a rh" style="top:822px;height:22px;line-height:22px;">21</div>
<div class="a" style="left:4px;top:843px;width:29px;height:1px;background:#dcdcdc;"></div>
<div class="a rh" style="top:844px;height:22px;line-height:22px;">22</div>
<div class="a" style="left:4px;top:865px;width:29px;height:1px;background:#dcdcdc;"></div>
<div class="a rh" style="top:866px;height:26px;line-height:26px;">23</div>
<div class="a" style="left:4px;top:891px;width:29px;height:1px;background:#dcdcdc;"></div>
<div class="a rh" style="top:892px;height:23px;line-height:23px;">24</div>
<div class="a" style="left:4px;top:914px;width:29px;height:1px;background:#dcdcdc;"></div>
<div class="a rh" style="top:915px;height:22px;line-height:22px;">25</div>
<div class="a" style="left:4px;top:936px;width:29px;height:1px;background:#dcdcdc;"></div>
<div class="a rh" style="top:937px;height:23px;line-height:23px;">26</div>
<div class="a" style="left:4px;top:959px;width:29px;height:1px;background:#dcdcdc;"></div>
<div class="a rh" style="top:960px;height:22px;line-height:22px;">27</div>
<div class="a" style="left:4px;top:981px;width:29px;height:1px;background:#dcdcdc;"></div>
<div class="a rh" style="top:982px;height:22px;line-height:22px;">28</div>
<div class="a" style="left:4px;top:1003px;width:29px;height:1px;background:#dcdcdc;"></div>
<div class="a rh" style="top:1004px;height:22px;line-height:22px;">29</div>
<div class="a" style="left:4px;top:1025px;width:29px;height:1px;background:#dcdcdc;"></div>
<div class="a rh" style="top:1026px;height:23px;line-height:23px;">30</div>
<div class="a" style="left:4px;top:1048px;width:29px;height:1px;background:#dcdcdc;"></div>
<div class="a rh" style="top:1049px;height:22px;line-height:22px;">31</div>
<div class="a" style="left:4px;top:1070px;width:29px;height:1px;background:#dcdcdc;"></div>
<div class="a rh" style="top:1071px;height:23px;line-height:23px;">32</div>
<div class="a" style="left:4px;top:1093px;width:29px;height:1px;background:#dcdcdc;"></div>
<div class="a rh" style="top:1094px;height:22px;line-height:22px;">33</div>
<div class="a" style="left:4px;top:1115px;width:29px;height:1px;background:#dcdcdc;"></div>
<div class="a rh" style="top:1116px;height:22px;line-height:22px;">34</div>
<div class="a" style="left:4px;top:1137px;width:29px;height:1px;background:#dcdcdc;"></div>
<div class="a rh" style="top:1138px;height:27px;line-height:27px;">35</div>
<div class="a" style="left:4px;top:1164px;width:29px;height:1px;background:#dcdcdc;"></div>
<div class="a rh" style="top:1165px;height:22px;line-height:22px;">36</div>
<div class="a" style="left:4px;top:1186px;width:29px;height:1px;background:#dcdcdc;"></div>
<div class="a rh" style="top:1187px;height:22px;line-height:22px;">37</div>
<div class="a" style="left:4px;top:1208px;width:29px;height:1px;background:#dcdcdc;"></div>
<div class="a rh" style="top:1209px;height:22px;line-height:22px;">38</div>
<div class="a" style="left:4px;top:1230px;width:29px;height:1px;background:#dcdcdc;"></div>
<div class="a rh" style="top:1231px;height:23px;line-height:23px;">39</div>
<div class="a" style="left:4px;top:1253px;width:29px;height:1px;background:#dcdcdc;"></div>
<div class="a rh" style="top:1254px;height:22px;line-height:22px;">40</div>
<div class="a" style="left:4px;top:1275px;width:29px;height:1px;background:#dcdcdc;"></div>
<div class="a rh" style="top:1276px;height:22px;line-height:22px;">41</div>
<div class="a" style="left:4px;top:1297px;width:29px;height:1px;background:#dcdcdc;"></div>
<div class="a rh" style="top:1298px;height:23px;line-height:23px;">42</div>
<div class="a" style="left:4px;top:1320px;width:29px;height:1px;background:#dcdcdc;"></div>
<div class="a rh" style="top:1321px;height:23px;line-height:23px;">43</div>
<div class="a" style="left:4px;top:1343px;width:29px;height:1px;background:#dcdcdc;"></div>
<div class="a rh" style="top:1344px;height:21px;line-height:21px;">44</div>
<div class="a" style="left:4px;top:1364px;width:29px;height:1px;background:#dcdcdc;"></div>
<div class="a rh" style="top:1365px;height:26px;line-height:26px;">45</div>
<div class="a" style="left:4px;top:1390px;width:29px;height:1px;background:#dcdcdc;"></div>
<div class="a rh" style="top:1391px;height:27px;line-height:27px;">46</div>
<div class="a" style="left:4px;top:1417px;width:29px;height:1px;background:#dcdcdc;"></div>
<div class="a rh" style="top:1418px;height:22px;line-height:22px;">47</div>
<div class="a" style="left:4px;top:1439px;width:29px;height:1px;background:#dcdcdc;"></div>
<div class="a rh" style="top:1440px;height:22px;line-height:22px;">48</div>
<div class="a" style="left:4px;top:1461px;width:29px;height:1px;background:#dcdcdc;"></div>
<div class="a rh" style="top:1462px;height:22px;line-height:22px;">49</div>
<div class="a" style="left:4px;top:1483px;width:29px;height:1px;background:#dcdcdc;"></div>
<div class="a rh" style="top:1484px;height:23px;line-height:23px;">50</div>
<div class="a" style="left:4px;top:1506px;width:29px;height:1px;background:#dcdcdc;"></div>
<div class="a rh" style="top:1507px;height:22px;line-height:22px;">51</div>
<div class="a" style="left:4px;top:1528px;width:29px;height:1px;background:#dcdcdc;"></div>
<div class="a rh" style="top:1529px;height:22px;line-height:22px;">52</div>
<div class="a" style="left:4px;top:1550px;width:29px;height:1px;background:#dcdcdc;"></div>
<div class="a rh" style="top:1551px;height:22px;line-height:22px;">53</div>
<div class="a" style="left:4px;top:1572px;width:29px;height:1px;background:#dcdcdc;"></div>
<div class="a rh" style="top:1573px;height:27px;line-height:27px;">54</div>
<div class="a" style="left:4px;top:1599px;width:29px;height:1px;background:#dcdcdc;"></div>
<div class="a rh" style="top:1600px;height:22px;line-height:22px;">55</div>
<div class="a" style="left:4px;top:1621px;width:29px;height:1px;background:#dcdcdc;"></div>
<div class="a rh" style="top:1622px;height:23px;line-height:23px;">56</div>
<div class="a" style="left:4px;top:1644px;width:29px;height:1px;background:#dcdcdc;"></div>
<div class="a rh" style="top:1645px;height:22px;line-height:22px;">57</div>
<div class="a" style="left:4px;top:1666px;width:29px;height:1px;background:#dcdcdc;"></div>
<div class="a rh" style="top:1667px;height:22px;line-height:22px;">58</div>
<div class="a" style="left:4px;top:1688px;width:29px;height:1px;background:#dcdcdc;"></div>
<div class="a rh" style="top:1689px;height:23px;line-height:23px;">59</div>
<div class="a" style="left:4px;top:1711px;width:29px;height:1px;background:#dcdcdc;"></div>
<div class="a rh" style="top:1712px;height:22px;line-height:22px;">60</div>
<div class="a" style="left:4px;top:1733px;width:29px;height:1px;background:#dcdcdc;"></div>
<div class="a rh" style="top:1734px;height:22px;line-height:22px;">61</div>
<div class="a" style="left:4px;top:1755px;width:29px;height:1px;background:#dcdcdc;"></div>
<div class="a rh" style="top:1756px;height:22px;line-height:22px;">62</div>
<div class="a" style="left:4px;top:1777px;width:29px;height:1px;background:#dcdcdc;"></div>
<div class="a rh" style="top:1778px;height:23px;line-height:23px;">63</div>
<div class="a" style="left:4px;top:1800px;width:29px;height:1px;background:#dcdcdc;"></div>
<div class="a rh" style="top:1801px;height:22px;line-height:22px;">64</div>
<div class="a" style="left:4px;top:1822px;width:29px;height:1px;background:#dcdcdc;"></div>
<div class="a rh" style="top:1823px;height:22px;line-height:22px;">65</div>
<div class="a" style="left:4px;top:1844px;width:29px;height:1px;background:#dcdcdc;"></div>
<div class="a rh" style="top:1845px;height:23px;line-height:23px;">66</div>
<div class="a" style="left:4px;top:1867px;width:29px;height:1px;background:#dcdcdc;"></div>
<div class="a rh" style="top:1868px;height:22px;line-height:22px;">67</div>
<div class="a" style="left:4px;top:1889px;width:29px;height:1px;background:#dcdcdc;"></div>
<div class="a rh" style="top:1890px;height:22px;line-height:22px;">68</div>
<div class="a" style="left:4px;top:1911px;width:29px;height:1px;background:#dcdcdc;"></div>
<svg class="a" style="left:14px;top:420px" width="16" height="16"><path d="M15 1v14H1z" fill="#dcdcdc"/></svg>
<div class="a" style="left:33px;top:439px;width:1692px;height:1474px;background:#fff;"></div>
<div class="a" style="left:32px;top:439px;width:1693px;height:23px;background:#70aad0;"></div>
<div class="a" style="left:54px;top:484px;width:484px;height:21px;background:#073c6e;"></div>
<div class="a" style="left:54px;top:505px;width:484px;height:27px;background:#70aad0;"></div>
<div class="a c l b w" style="left:54px;top:484px;width:284px;height:21px;line-height:21px;letter-spacing:-0.15px;">Valuation Summary</div>
<div class="a c m b u" style="left:338px;top:505px;width:100px;height:27px;line-height:27px;letter-spacing:0.18px;">Unit</div>
<div class="a c m b u" style="left:438px;top:505px;width:100px;height:27px;line-height:27px;letter-spacing:0.28px;">Metric</div>
<div class="a c l" style="left:54px;top:532px;width:284px;height:22px;line-height:22px;letter-spacing:-0.40px;white-space:pre;">2023 EBITDA</div>
<div class="a c m" style="left:338px;top:532px;width:100px;height:22px;line-height:22px;letter-spacing:-0.08px;">US$mm</div>
<div class="a c nc p g" style="left:438px;top:532px;width:100px;height:22px;line-height:22px;letter-spacing:0.12px;">1,501.4</div>
<div class="a c l" style="left:54px;top:554px;width:284px;height:22px;line-height:22px;letter-spacing:-0.27px;white-space:pre;">FV /  Entry EBITDA</div>
<div class="a c m" style="left:338px;top:554px;width:100px;height:22px;line-height:22px;font-size:14.4px;letter-spacing:-0.45px;">x EBITDA</div>
<div class="a c m" style="left:438px;top:554px;width:100px;height:22px;line-height:22px;letter-spacing:0.04px;">7.5x</div>
<div class="a c l b" style="left:54px;top:576px;width:284px;height:23px;line-height:23px;letter-spacing:-0.18px;white-space:pre;">Firm Value</div>
<div class="a c m b" style="left:338px;top:576px;width:100px;height:23px;line-height:23px;letter-spacing:-0.23px;">US$mm</div>
<div class="a c nc p b" style="left:438px;top:576px;width:100px;height:23px;line-height:23px;letter-spacing:0.28px;">11,260.2</div>
<div class="a c l" style="left:54px;top:599px;width:284px;height:22px;line-height:22px;letter-spacing:0.16px;white-space:pre;">(-) Total Debt</div>
<div class="a c m" style="left:338px;top:599px;width:100px;height:22px;line-height:22px;letter-spacing:-0.08px;">US$mm</div>
<div class="a c nc p g" style="left:438px;top:599px;width:100px;height:22px;line-height:22px;letter-spacing:0.14px;">-300.0</div>
<div class="a c l" style="left:54px;top:621px;width:284px;height:22px;line-height:22px;font-size:14.6px;letter-spacing:-0.45px;white-space:pre;">(=) Excess Cash</div>
<div class="a c m" style="left:338px;top:621px;width:100px;height:22px;line-height:22px;letter-spacing:-0.08px;">US$mm</div>
<div class="a c nc p g" style="left:438px;top:621px;width:100px;height:22px;line-height:22px;letter-spacing:0.14px;">100.0</div>
<div class="a c l b" style="left:54px;top:643px;width:284px;height:23px;line-height:23px;letter-spacing:-0.21px;white-space:pre;">Total Equity Value</div>
<div class="a c m b" style="left:338px;top:643px;width:100px;height:23px;line-height:23px;letter-spacing:-0.23px;">US$mm</div>
<div class="a c nc p b" style="left:438px;top:643px;width:100px;height:23px;line-height:23px;letter-spacing:0.28px;">11,060.2</div>
<div class="a c l" style="left:54px;top:666px;width:284px;height:22px;line-height:22px;letter-spacing:-0.35px;white-space:pre;">Stake</div>
<div class="a c m" style="left:338px;top:666px;width:100px;height:22px;line-height:22px;font-size:13.8px;letter-spacing:-0.45px;">%</div>
<div class="a c m" style="left:438px;top:666px;width:100px;height:22px;line-height:22px;letter-spacing:-0.11px;">100.0%</div>
<div class="a c l b" style="left:54px;top:688px;width:284px;height:22px;line-height:22px;letter-spacing:-0.41px;white-space:pre;">GRAM ABF's Acquisition Stake</div>
<div class="a c m b" style="left:338px;top:688px;width:100px;height:22px;line-height:22px;letter-spacing:-0.23px;">US$mm</div>
<div class="a c nc p b" style="left:438px;top:688px;width:100px;height:22px;line-height:22px;letter-spacing:0.28px;">11,060.2</div>
<div class="a c l" style="left:54px;top:710px;width:284px;height:23px;line-height:23px;letter-spacing:-0.12px;white-space:pre;">Transaction Costs</div>
<div class="a c m" style="left:338px;top:710px;width:100px;height:23px;line-height:23px;letter-spacing:-0.08px;">US$mm</div>
<div class="a c nc p" style="left:438px;top:710px;width:100px;height:23px;line-height:23px;letter-spacing:0.14px;">331.8</div>
<div class="a c l" style="left:54px;top:733px;width:284px;height:22px;line-height:22px;letter-spacing:0.09px;white-space:pre;">Debt Structuring Costs</div>
<div class="a c m" style="left:338px;top:733px;width:100px;height:22px;line-height:22px;letter-spacing:-0.08px;">US$mm</div>
<div class="a c nc p" style="left:438px;top:733px;width:100px;height:22px;line-height:22px;letter-spacing:0.13px;">67.6</div>
<div class="a c l b" style="left:54px;top:755px;width:284px;height:22px;line-height:22px;letter-spacing:-0.39px;white-space:pre;">Total Transaction Cost</div>
<div class="a c m b" style="left:338px;top:755px;width:100px;height:22px;line-height:22px;letter-spacing:-0.23px;">US$mm</div>
<div class="a c nc p b" style="left:438px;top:755px;width:100px;height:22px;line-height:22px;letter-spacing:0.28px;">11,459.6</div>
<div class="a c l" style="left:54px;top:777px;width:284px;height:23px;line-height:23px;letter-spacing:0.12px;white-space:pre;">Acquisition Financing</div>
<div class="a c m" style="left:338px;top:777px;width:100px;height:23px;line-height:23px;letter-spacing:-0.08px;">US$mm</div>
<div class="a c nc" style="left:438px;top:777px;width:100px;height:23px;line-height:23px;letter-spacing:0.12px;">(4,504.1)</div>
<div class="a c l b" style="left:54px;top:800px;width:284px;height:22px;line-height:22px;font-size:14.7px;letter-spacing:-0.45px;white-space:pre;">Gram ABF Equity Check</div>
<div class="a c m b" style="left:338px;top:800px;width:100px;height:22px;line-height:22px;letter-spacing:-0.23px;">US$mm</div>
<div class="a c nc p b" style="left:438px;top:800px;width:100px;height:22px;line-height:22px;letter-spacing:0.18px;">6,955.5</div>
<div class="a" style="left:54px;top:576px;width:484px;height:1px;background:#000;"></div>
<div class="a" style="left:54px;top:643px;width:484px;height:1px;background:#000;"></div>
<div class="a" style="left:54px;top:755px;width:484px;height:1px;background:#000;"></div>
<div class="a" style="left:54px;top:799px;width:484px;height:1px;background:#000;"></div>
<div class="a" style="left:54px;top:844px;width:484px;height:22px;background:#073c6e;"></div>
<div class="a" style="left:54px;top:866px;width:484px;height:26px;background:#70aad0;"></div>
<div class="a c l b w" style="left:54px;top:844px;width:284px;height:22px;line-height:22px;font-size:14.5px;letter-spacing:-0.45px;">Sources and Uses</div>
<div class="a c m b u" style="left:338px;top:866px;width:100px;height:26px;line-height:26px;letter-spacing:-0.26px;">US$ mm</div>
<div class="a c m b u" style="left:438px;top:866px;width:100px;height:26px;line-height:26px;font-size:14.5px;letter-spacing:-0.45px;">x</div>
<div class="a" style="left:55px;top:892px;width:481px;height:23px;background:#e6e6e6;"></div>
<div class="a" style="left:55px;top:982px;width:481px;height:22px;background:#e6e6e6;"></div>
<div class="a c l b" style="left:54px;top:892px;width:284px;height:23px;line-height:23px;font-size:14.3px;letter-spacing:-0.45px;">Sources</div>
<div class="a c l" style="left:76px;top:915px;width:262px;height:22px;line-height:22px;letter-spacing:0.11px;">Equity Ticket</div>
<div class="a c nc p" style="left:338px;top:915px;width:100px;height:22px;line-height:22px;letter-spacing:0.12px;">6,955.5</div>
<div class="a c m" style="left:438px;top:915px;width:100px;height:22px;line-height:22px;letter-spacing:0.04px;">4.6x</div>
<div class="a c l" style="left:76px;top:937px;width:262px;height:23px;line-height:23px;letter-spacing:0.12px;">Acquisition Financing</div>
<div class="a c nc p" style="left:338px;top:937px;width:100px;height:23px;line-height:23px;letter-spacing:0.12px;">4,504.1</div>
<div class="a c m" style="left:438px;top:937px;width:100px;height:23px;line-height:23px;letter-spacing:0.04px;">3.0x</div>
<div class="a c l b" style="left:54px;top:960px;width:284px;height:22px;line-height:22px;font-size:14.7px;letter-spacing:-0.45px;">Total Sources</div>
<div class="a c nc p b" style="left:338px;top:960px;width:100px;height:22px;line-height:22px;letter-spacing:0.28px;">11,459.6</div>
<div class="a c m b" style="left:438px;top:960px;width:100px;height:22px;line-height:22px;letter-spacing:-0.00px;">7.6x</div>
<div class="a c l b" style="left:54px;top:982px;width:284px;height:22px;line-height:22px;font-size:14.3px;letter-spacing:-0.45px;">Uses</div>
<div class="a c l" style="left:76px;top:1004px;width:262px;height:22px;line-height:22px;letter-spacing:0.28px;">Acquisition</div>
<div class="a c nc p" style="left:338px;top:1004px;width:100px;height:22px;line-height:22px;letter-spacing:0.27px;">11,060.2</div>
<div class="a c m" style="left:438px;top:1004px;width:100px;height:22px;line-height:22px;letter-spacing:0.04px;">7.4x</div>
<div class="a c l" style="left:76px;top:1026px;width:262px;height:23px;line-height:23px;letter-spacing:-0.12px;">Transaction Costs</div>
<div class="a c nc p" style="left:338px;top:1026px;width:100px;height:23px;line-height:23px;letter-spacing:0.14px;">331.8</div>
<div class="a c m" style="left:438px;top:1026px;width:100px;height:23px;line-height:23px;letter-spacing:0.04px;">0.2x</div>
<div class="a c l" style="left:76px;top:1049px;width:262px;height:22px;line-height:22px;letter-spacing:0.09px;">Debt Structuring Costs</div>
<div class="a c nc p" style="left:338px;top:1049px;width:100px;height:22px;line-height:22px;letter-spacing:0.13px;">67.6</div>
<div class="a c m" style="left:438px;top:1049px;width:100px;height:22px;line-height:22px;letter-spacing:0.04px;">0.0x</div>
<div class="a c l b" style="left:54px;top:1071px;width:284px;height:23px;line-height:23px;letter-spacing:-0.42px;">Total Uses</div>
<div class="a c nc p b" style="left:338px;top:1071px;width:100px;height:23px;line-height:23px;letter-spacing:0.28px;">11,459.6</div>
<div class="a c m b" style="left:438px;top:1071px;width:100px;height:23px;line-height:23px;letter-spacing:-0.00px;">7.6x</div>
<div class="a" style="left:54px;top:981px;width:484px;height:1px;background:#000;"></div>
<div class="a" style="left:54px;top:1071px;width:484px;height:1px;background:#000;"></div>
<div class="a" style="left:54px;top:1116px;width:484px;height:22px;background:#073c6e;"></div>
<div class="a" style="left:54px;top:1138px;width:484px;height:27px;background:#70aad0;"></div>
<div class="a c l b w" style="left:54px;top:1116px;width:284px;height:22px;line-height:22px;letter-spacing:-0.38px;">Acquisition Assumptions</div>
<div class="a c m b u" style="left:338px;top:1138px;width:100px;height:27px;line-height:27px;letter-spacing:0.18px;">Unit</div>
<div class="a c m b u" style="left:438px;top:1138px;width:100px;height:27px;line-height:27px;letter-spacing:0.28px;">Metric</div>
<div class="a" style="left:438px;top:1165px;width:98px;height:89px;background:#f4e8d5;"></div>
<div class="a" style="left:438px;top:1298px;width:98px;height:45px;background:#f4e8d5;"></div>
<div class="a c l" style="left:54px;top:1165px;width:284px;height:22px;line-height:22px;letter-spacing:0.19px;">Acquisition Date</div>
<div class="a c m" style="left:338px;top:1165px;width:100px;height:22px;line-height:22px;letter-spacing:-0.23px;">x</div>
<div class="a c m bl" style="left:438px;top:1165px;width:100px;height:22px;line-height:22px;font-size:15.2px;letter-spacing:0.50px;">12/31/23</div>
<div class="a c l" style="left:54px;top:1187px;width:284px;height:22px;line-height:22px;letter-spacing:0.44px;">Entry Multiple</div>
<div class="a c m" style="left:338px;top:1187px;width:100px;height:22px;line-height:22px;letter-spacing:-0.23px;">x</div>
<div class="a c m bl" style="left:438px;top:1187px;width:100px;height:22px;line-height:22px;letter-spacing:0.04px;">7.5x</div>
<div class="a c l" style="left:54px;top:1209px;width:284px;height:22px;line-height:22px;letter-spacing:0.32px;">Mid-year convention</div>
<div class="a c m" style="left:338px;top:1209px;width:100px;height:22px;line-height:22px;letter-spacing:-0.27px;">Year</div>
<div class="a c m bl" style="left:438px;top:1209px;width:100px;height:22px;line-height:22px;font-size:14.1px;letter-spacing:-0.45px;">Yes</div>
<div class="a c l" style="left:54px;top:1231px;width:284px;height:23px;line-height:23px;font-size:14.2px;letter-spacing:-0.45px;">WACC</div>
<div class="a c m" style="left:338px;top:1231px;width:100px;height:23px;line-height:23px;letter-spacing:-0.23px;">Rate</div>
<div class="a c m bl" style="left:438px;top:1231px;width:100px;height:23px;line-height:23px;letter-spacing:-0.16px;">16.0%</div>
<div class="a c l" style="left:54px;top:1254px;width:284px;height:22px;line-height:22px;font-size:14.4px;letter-spacing:-0.45px;">Cash</div>
<div class="a c m" style="left:338px;top:1254px;width:100px;height:22px;line-height:22px;letter-spacing:-0.13px;">US$ mm</div>
<div class="a c nc p bl" style="left:438px;top:1254px;width:100px;height:22px;line-height:22px;letter-spacing:0.14px;">100.0</div>
<div class="a c l" style="left:54px;top:1276px;width:284px;height:22px;line-height:22px;letter-spacing:0.33px;">Debt</div>
<div class="a c m" style="left:338px;top:1276px;width:100px;height:22px;line-height:22px;letter-spacing:-0.13px;">US$ mm</div>
<div class="a c nc p bl" style="left:438px;top:1276px;width:100px;height:22px;line-height:22px;letter-spacing:0.14px;">300.0</div>
<div class="a c l" style="left:54px;top:1298px;width:284px;height:23px;line-height:23px;letter-spacing:-0.12px;">Transaction Costs</div>
<div class="a c m" style="left:338px;top:1298px;width:100px;height:23px;line-height:23px;font-size:13.8px;letter-spacing:-0.45px;">%</div>
<div class="a c m bl" style="left:438px;top:1298px;width:100px;height:23px;line-height:23px;letter-spacing:-0.24px;">3.0%</div>
<div class="a c l" style="left:54px;top:1321px;width:284px;height:23px;line-height:23px;letter-spacing:0.04px;">Stake Acquired</div>
<div class="a c m bl" style="left:438px;top:1321px;width:100px;height:23px;line-height:23px;letter-spacing:-0.11px;">100.0%</div>
<div class="a" style="left:54px;top:1365px;width:484px;height:26px;background:#073c6e;"></div>
<div class="a" style="left:54px;top:1391px;width:484px;height:27px;background:#70aad0;"></div>
<div class="a c l b w" style="left:54px;top:1365px;width:284px;height:26px;line-height:26px;letter-spacing:-0.42px;padding-top:0;">Exit Assumptions</div>
<div class="a c m b u" style="left:338px;top:1391px;width:100px;height:27px;line-height:27px;letter-spacing:0.18px;">Unit</div>
<div class="a c m b u" style="left:438px;top:1391px;width:100px;height:27px;line-height:27px;letter-spacing:0.28px;">Metric</div>
<div class="a" style="left:438px;top:1440px;width:98px;height:88px;background:#f4e8d5;"></div>
<div class="a c l" style="left:54px;top:1418px;width:284px;height:22px;line-height:22px;letter-spacing:0.40px;">Exit Multiple</div>
<div class="a c m" style="left:338px;top:1418px;width:100px;height:22px;line-height:22px;letter-spacing:-0.23px;">x</div>
<div class="a c m" style="left:438px;top:1418px;width:100px;height:22px;line-height:22px;letter-spacing:0.04px;">7.5x</div>
<div class="a c l" style="left:54px;top:1440px;width:284px;height:22px;line-height:22px;letter-spacing:-0.12px;">Transaction Costs</div>
<div class="a c m" style="left:338px;top:1440px;width:100px;height:22px;line-height:22px;font-size:13.8px;letter-spacing:-0.45px;">%</div>
<div class="a c m bl" style="left:438px;top:1440px;width:100px;height:22px;line-height:22px;letter-spacing:-0.24px;">3.0%</div>
<div class="a c l" style="left:54px;top:1462px;width:284px;height:22px;line-height:22px;font-size:14.3px;letter-spacing:-0.45px;">Excess Cash</div>
<div class="a c m" style="left:338px;top:1462px;width:100px;height:22px;line-height:22px;letter-spacing:-0.31px;">% of Rev.</div>
<div class="a c m bl" style="left:438px;top:1462px;width:100px;height:22px;line-height:22px;letter-spacing:-0.24px;">5.0%</div>
<div class="a c l" style="left:54px;top:1484px;width:284px;height:23px;line-height:23px;letter-spacing:0.30px;">Management Warrants</div>
<div class="a c m" style="left:338px;top:1484px;width:100px;height:23px;line-height:23px;letter-spacing:-0.32px;">% of EqV.</div>
<div class="a c m bl" style="left:438px;top:1484px;width:100px;height:23px;line-height:23px;letter-spacing:-0.24px;">3.0%</div>
<div class="a c l" style="left:54px;top:1507px;width:284px;height:22px;line-height:22px;letter-spacing:-0.17px;">Capital Gains Tax</div>
<div class="a c m" style="left:338px;top:1507px;width:100px;height:22px;line-height:22px;letter-spacing:-0.30px;">Rate (%)</div>
<div class="a c m bl" style="left:438px;top:1507px;width:100px;height:22px;line-height:22px;letter-spacing:-0.16px;">35.0%</div>
<div class="a tri-r" style="left:530px;top:1507px;"></div>
<div class="a" style="left:54px;top:1551px;width:484px;height:22px;background:#073c6e;"></div>
<div class="a" style="left:54px;top:1573px;width:484px;height:27px;background:#70aad0;"></div>
<div class="a c l b w" style="left:54px;top:1551px;width:284px;height:22px;line-height:22px;letter-spacing:-0.41px;">Acquisition Financing</div>
<div class="a c m b u" style="left:338px;top:1573px;width:100px;height:27px;line-height:27px;letter-spacing:0.18px;">Unit</div>
<div class="a c m b u" style="left:438px;top:1573px;width:100px;height:27px;line-height:27px;letter-spacing:0.28px;">Metric</div>
<div class="a" style="left:438px;top:1600px;width:98px;height:156px;background:#f4e8d5;"></div>
<div class="a c l" style="left:54px;top:1600px;width:284px;height:22px;line-height:22px;letter-spacing:0.06px;">Debt Turns</div>
<div class="a c m" style="left:338px;top:1600px;width:100px;height:22px;line-height:22px;letter-spacing:-0.23px;">x</div>
<div class="a c m bl" style="left:438px;top:1600px;width:100px;height:22px;line-height:22px;letter-spacing:0.04px;">3.0x</div>
<div class="a c l" style="left:54px;top:1622px;width:284px;height:23px;line-height:23px;letter-spacing:0.10px;">Interest Rate</div>
<div class="a c m" style="left:338px;top:1622px;width:100px;height:23px;line-height:23px;letter-spacing:-0.30px;">Rate (%)</div>
<div class="a c m bl" style="left:438px;top:1622px;width:100px;height:23px;line-height:23px;letter-spacing:-0.16px;">12.0%</div>
<div class="a c l" style="left:54px;top:1645px;width:284px;height:22px;line-height:22px;letter-spacing:0.23px;">Term</div>
<div class="a c m" style="left:338px;top:1645px;width:100px;height:22px;line-height:22px;letter-spacing:-0.45px;">Years</div>
<div class="a c nc p bl" style="left:438px;top:1645px;width:100px;height:22px;line-height:22px;letter-spacing:0.13px;">7.0</div>
<div class="a c l" style="left:54px;top:1667px;width:284px;height:22px;line-height:22px;letter-spacing:0.19px;">Balloon</div>
<div class="a c m" style="left:338px;top:1667px;width:100px;height:22px;line-height:22px;font-size:13.8px;letter-spacing:-0.45px;">%</div>
<div class="a c m bl" style="left:438px;top:1667px;width:100px;height:22px;line-height:22px;letter-spacing:-0.16px;">60.0%</div>
<div class="a c l" style="left:54px;top:1689px;width:284px;height:23px;line-height:23px;letter-spacing:-0.08px;">Grace Period</div>
<div class="a c m" style="left:338px;top:1689px;width:100px;height:23px;line-height:23px;letter-spacing:-0.45px;">Years</div>
<div class="a c nc p bl" style="left:438px;top:1689px;width:100px;height:23px;line-height:23px;letter-spacing:0.13px;">1.0</div>
<div class="a c l" style="left:54px;top:1712px;width:284px;height:22px;line-height:22px;letter-spacing:0.13px;">Disbursement Date</div>
<div class="a c m" style="left:338px;top:1712px;width:100px;height:22px;line-height:22px;letter-spacing:0.07px;">Date</div>
<div class="a c m bl" style="left:438px;top:1712px;width:100px;height:22px;line-height:22px;font-size:15.2px;letter-spacing:0.50px;">12/31/23</div>
<div class="a c l" style="left:54px;top:1734px;width:284px;height:22px;line-height:22px;letter-spacing:0.14px;">Debt Structuring Cost</div>
<div class="a c m" style="left:338px;top:1734px;width:100px;height:22px;line-height:22px;font-size:13.8px;letter-spacing:-0.45px;">%</div>
<div class="a c m bl" style="left:438px;top:1734px;width:100px;height:22px;line-height:22px;letter-spacing:-0.24px;">1.5%</div>
<div class="a c l" style="left:54px;top:1756px;width:284px;height:22px;line-height:22px;font-size:14.7px;letter-spacing:-0.45px;">2023E EBITDA</div>
<div class="a c m" style="left:338px;top:1756px;width:100px;height:22px;line-height:22px;letter-spacing:-0.13px;">US$ mm</div>
<div class="a c nc p" style="left:438px;top:1756px;width:100px;height:22px;line-height:22px;letter-spacing:0.12px;">1,501.4</div>
<div class="a c l" style="left:54px;top:1778px;width:284px;height:23px;line-height:23px;letter-spacing:0.12px;">Acquisition Financing</div>
<div class="a c m" style="left:338px;top:1778px;width:100px;height:23px;line-height:23px;letter-spacing:-0.13px;">US$ mm</div>
<div class="a c nc p" style="left:438px;top:1778px;width:100px;height:23px;line-height:23px;letter-spacing:0.12px;">4,504.1</div>
<div class="a c l" style="left:32px;top:484px;width:22px;height:21px;line-height:21px;letter-spacing:-0.23px;">x</div>
<div class="a c l" style="left:32px;top:621px;width:22px;height:22px;line-height:22px;letter-spacing:-0.23px;">x</div>
<div class="a c l" style="left:32px;top:866px;width:22px;height:26px;line-height:26px;letter-spacing:-0.23px;">x</div>
<div class="a c l" style="left:32px;top:1138px;width:22px;height:27px;line-height:27px;letter-spacing:-0.23px;">x</div>
<div class="a c l" style="left:32px;top:1391px;width:22px;height:27px;line-height:27px;letter-spacing:-0.23px;">x</div>
<div class="a c l" style="left:32px;top:1600px;width:22px;height:22px;line-height:22px;letter-spacing:-0.23px;">x</div>
<div class="a c l" style="left:32px;top:1823px;width:22px;height:22px;line-height:22px;letter-spacing:-0.23px;">x</div>
<div class="a c l" style="left:538px;top:484px;width:22px;height:21px;line-height:21px;letter-spacing:-0.23px;">x</div>
<div class="a c l" style="left:538px;top:1344px;width:22px;height:21px;line-height:21px;letter-spacing:-0.23px;">x</div>
<div class="a c l" style="left:538px;top:1823px;width:22px;height:22px;line-height:22px;letter-spacing:-0.23px;">x</div>
<div class="a" style="left:560px;top:484px;width:1143px;height:21px;background:#073c6e;"></div>
<div class="a" style="left:560px;top:505px;width:1143px;height:27px;background:#70aad0;"></div>
<div class="a c l2 b w" style="left:560px;top:484px;width:284px;height:21px;line-height:21px;letter-spacing:-0.37px;">Transaction Returns</div>
<div class="a c m b u" style="left:844px;top:505px;width:100px;height:27px;line-height:27px;letter-spacing:0.18px;">Unit</div>
<div class="a c m b u" style="left:944px;top:505px;width:100px;height:27px;line-height:27px;letter-spacing:0.28px;">Metric</div>
<div class="a" style="left:561px;top:554px;width:1139px;height:22px;background:#e6e6e6;"></div>
<div class="a c l2 b" style="left:560px;top:554px;width:284px;height:22px;line-height:22px;font-size:14.3px;letter-spacing:-0.45px;">ABF's Cash Flows</div>
<div class="a c r" style="left:1044px;top:554px;width:82px;height:22px;line-height:22px;font-size:15.2px;letter-spacing:0.50px;">12/31/23</div>
<div class="a c r" style="left:1126px;top:554px;width:82px;height:22px;line-height:22px;font-size:15.4px;letter-spacing:0.50px;">6/30/24</div>
<div class="a c r" style="left:1208px;top:554px;width:82px;height:22px;line-height:22px;font-size:15.4px;letter-spacing:0.50px;">6/30/25</div>
<div class="a c r" style="left:1290px;top:554px;width:83px;height:22px;line-height:22px;font-size:15.4px;letter-spacing:0.50px;">6/30/26</div>
<div class="a c r" style="left:1373px;top:554px;width:83px;height:22px;line-height:22px;font-size:15.4px;letter-spacing:0.50px;">6/30/27</div>
<div class="a c r" style="left:1456px;top:554px;width:82px;height:22px;line-height:22px;font-size:15.2px;letter-spacing:0.50px;">12/31/27</div>
<div class="a c r" style="left:1538px;top:554px;width:82px;height:22px;line-height:22px;font-size:15.4px;letter-spacing:0.50px;">6/30/28</div>
<div class="a c r" style="left:1620px;top:554px;width:83px;height:22px;line-height:22px;font-size:15.2px;letter-spacing:0.50px;">12/31/28</div>
<div class="a c l2" style="left:560px;top:576px;width:284px;height:23px;line-height:23px;letter-spacing:-0.27px;">4-Year Cash Flow</div>
<div class="a c m" style="left:844px;top:576px;width:100px;height:23px;line-height:23px;letter-spacing:-0.13px;">US$ mm</div>
<div class="a c m" style="left:944px;top:576px;width:100px;height:23px;line-height:23px;letter-spacing:0.14px;">--</div>
<div class="a c nr" style="left:1044px;top:576px;width:82px;height:23px;line-height:23px;letter-spacing:0.12px;">(6,955.5)</div>
<div class="a c nr p" style="left:1126px;top:576px;width:82px;height:23px;line-height:23px;letter-spacing:0.14px;">649.6</div>
<div class="a c nr p" style="left:1208px;top:576px;width:82px;height:23px;line-height:23px;letter-spacing:0.14px;">586.7</div>
<div class="a c nr p" style="left:1290px;top:576px;width:83px;height:23px;line-height:23px;letter-spacing:0.14px;">870.8</div>
<div class="a c nr p" style="left:1373px;top:576px;width:83px;height:23px;line-height:23px;letter-spacing:0.12px;">1,179.2</div>
<div class="a c nr p" style="left:1456px;top:576px;width:82px;height:23px;line-height:23px;letter-spacing:0.13px;">15,780.0</div>
<div class="a c l2" style="left:560px;top:599px;width:284px;height:22px;line-height:22px;letter-spacing:-0.27px;">5-Year Cash Flow</div>
<div class="a c m" style="left:844px;top:599px;width:100px;height:22px;line-height:22px;letter-spacing:-0.13px;">US$ mm</div>
<div class="a c m" style="left:944px;top:599px;width:100px;height:22px;line-height:22px;letter-spacing:0.14px;">--</div>
<div class="a c nr" style="left:1044px;top:599px;width:82px;height:22px;line-height:22px;letter-spacing:0.12px;">(6,955.5)</div>
<div class="a c nr p" style="left:1126px;top:599px;width:82px;height:22px;line-height:22px;letter-spacing:0.14px;">649.6</div>
<div class="a c nr p" style="left:1208px;top:599px;width:82px;height:22px;line-height:22px;letter-spacing:0.14px;">586.7</div>
<div class="a c nr p" style="left:1290px;top:599px;width:83px;height:22px;line-height:22px;letter-spacing:0.14px;">870.8</div>
<div class="a c nr p" style="left:1373px;top:599px;width:83px;height:22px;line-height:22px;letter-spacing:0.12px;">1,179.2</div>
<div class="a c nr p" style="left:1538px;top:599px;width:82px;height:22px;line-height:22px;letter-spacing:0.12px;">1,524.4</div>
<div class="a c nr p" style="left:1620px;top:599px;width:83px;height:22px;line-height:22px;letter-spacing:0.13px;">18,079.3</div>
<div class="a" style="left:1539px;top:576px;width:161px;height:23px;background:repeating-linear-gradient(135deg,#e4e4e4 0 2px,#fafafa 2px 6px);"></div>
<div class="a" style="left:1456px;top:600px;width:82px;height:21px;background:repeating-linear-gradient(135deg,#e4e4e4 0 2px,#fafafa 2px 6px);"></div>
<div class="a" style="left:1455px;top:576px;width:84px;height:1px;background:repeating-linear-gradient(90deg,#111 0 2px,transparent 2px 4px);"></div>
<div class="a" style="left:1455px;top:599px;width:84px;height:1px;background:repeating-linear-gradient(90deg,#111 0 2px,transparent 2px 4px);"></div>
<div class="a" style="left:1455px;top:576px;width:1px;height:24px;background:repeating-linear-gradient(180deg,#111 0 2px,transparent 2px 4px);"></div>
<div class="a" style="left:1538px;top:576px;width:1px;height:24px;background:repeating-linear-gradient(180deg,#111 0 2px,transparent 2px 4px);"></div>
<div class="a" style="left:1620px;top:599px;width:83px;height:1px;background:repeating-linear-gradient(90deg,#111 0 2px,transparent 2px 4px);"></div>
<div class="a" style="left:1620px;top:621px;width:83px;height:1px;background:repeating-linear-gradient(90deg,#111 0 2px,transparent 2px 4px);"></div>
<div class="a" style="left:1620px;top:599px;width:1px;height:23px;background:repeating-linear-gradient(180deg,#111 0 2px,transparent 2px 4px);"></div>
<div class="a" style="left:561px;top:643px;width:483px;height:23px;background:#e6e6e6;"></div>
<div class="a c l2 b" style="left:560px;top:643px;width:284px;height:23px;line-height:23px;letter-spacing:-0.38px;">Returns</div>
<div class="a c m b" style="left:844px;top:643px;width:100px;height:23px;line-height:23px;font-size:14.2px;letter-spacing:-0.45px;">IRR</div>
<div class="a c m b" style="left:944px;top:643px;width:100px;height:23px;line-height:23px;letter-spacing:0.05px;">MOIC</div>
<div class="a c l2" style="left:560px;top:666px;width:284px;height:22px;line-height:22px;letter-spacing:-0.27px;">4-Year Cash Flow</div>
<div class="a c m" style="left:844px;top:666px;width:100px;height:22px;line-height:22px;letter-spacing:-0.16px;">32.4%</div>
<div class="a c m" style="left:944px;top:666px;width:100px;height:22px;line-height:22px;letter-spacing:0.06px;">2.74x</div>
<div class="a c l2" style="left:560px;top:688px;width:284px;height:22px;line-height:22px;letter-spacing:-0.27px;">5-Year Cash Flow</div>
<div class="a c m" style="left:844px;top:688px;width:100px;height:22px;line-height:22px;letter-spacing:-0.16px;">31.2%</div>
<div class="a c m" style="left:944px;top:688px;width:100px;height:22px;line-height:22px;letter-spacing:0.06px;">3.29x</div>
<div class="a" style="left:560px;top:642px;width:485px;height:1px;background:repeating-linear-gradient(90deg,#111 0 2px,transparent 2px 4px);"></div>
<div class="a" style="left:560px;top:710px;width:485px;height:1px;background:repeating-linear-gradient(90deg,#111 0 2px,transparent 2px 4px);"></div>
<div class="a" style="left:1044px;top:642px;width:1px;height:69px;background:repeating-linear-gradient(180deg,#111 0 2px,transparent 2px 4px);"></div>
<div class="a" style="left:560px;top:665px;width:484px;height:1px;background:#000;"></div>
<div class="a" style="left:561px;top:733px;width:1139px;height:22px;background:#e6e6e6;"></div>
<div class="a c l2 b" style="left:560px;top:733px;width:284px;height:22px;line-height:22px;font-size:13px;letter-spacing:-0.51px;">FCFE</div>
<div class="a c r b" style="left:1044px;top:733px;width:82px;height:22px;line-height:22px;letter-spacing:0.16px;">2023</div>
<div class="a c r b" style="left:1126px;top:733px;width:82px;height:22px;line-height:22px;letter-spacing:0.16px;">2024</div>
<div class="a c r b" style="left:1208px;top:733px;width:82px;height:22px;line-height:22px;letter-spacing:0.16px;">2025</div>
<div class="a c r b" style="left:1290px;top:733px;width:83px;height:22px;line-height:22px;letter-spacing:0.16px;">2026</div>
<div class="a c r b" style="left:1373px;top:733px;width:83px;height:22px;line-height:22px;letter-spacing:0.16px;">2027</div>
<div class="a c r b" style="left:1456px;top:733px;width:82px;height:22px;line-height:22px;letter-spacing:0.16px;">2028</div>
<div class="a c l2" style="left:560px;top:755px;width:284px;height:22px;line-height:22px;font-size:13px;letter-spacing:-0.45px;">FCFF</div>
<div class="a c m" style="left:844px;top:755px;width:100px;height:22px;line-height:22px;letter-spacing:-0.13px;">US$ mm</div>
<div class="a c m" style="left:944px;top:755px;width:100px;height:22px;line-height:22px;letter-spacing:0.14px;">--</div>
<div class="a c nr p g" style="left:1126px;top:755px;width:82px;height:22px;line-height:22px;letter-spacing:0.12px;">1,190.1</div>
<div class="a c nr p g" style="left:1208px;top:755px;width:82px;height:22px;line-height:22px;letter-spacing:0.12px;">1,409.4</div>
<div class="a c nr p g" style="left:1290px;top:755px;width:83px;height:22px;line-height:22px;letter-spacing:0.12px;">1,657.5</div>
<div class="a c nr p g" style="left:1373px;top:755px;width:83px;height:22px;line-height:22px;letter-spacing:0.12px;">1,929.9</div>
<div class="a c nr p g" style="left:1456px;top:755px;width:82px;height:22px;line-height:22px;letter-spacing:0.12px;">2,239.0</div>
<div class="a c l2" style="left:560px;top:777px;width:284px;height:23px;line-height:23px;letter-spacing:0.19px;">Debt Disbursement</div>
<div class="a c m" style="left:844px;top:777px;width:100px;height:23px;line-height:23px;letter-spacing:-0.13px;">US$ mm</div>
<div class="a c m" style="left:944px;top:777px;width:100px;height:23px;line-height:23px;letter-spacing:0.14px;">--</div>
<div class="a c nr p g" style="left:1044px;top:777px;width:82px;height:23px;line-height:23px;letter-spacing:0.12px;">4,504.1</div>
<div class="a c nr p g" style="left:1126px;top:777px;width:82px;height:23px;line-height:23px;letter-spacing:0.13px;">0.0</div>
<div class="a c nr p g" style="left:1208px;top:777px;width:82px;height:23px;line-height:23px;letter-spacing:0.13px;">0.0</div>
<div class="a c nr p g" style="left:1290px;top:777px;width:83px;height:23px;line-height:23px;letter-spacing:0.13px;">0.0</div>
<div class="a c nr p g" style="left:1373px;top:777px;width:83px;height:23px;line-height:23px;letter-spacing:0.13px;">0.0</div>
<div class="a c nr p g" style="left:1456px;top:777px;width:82px;height:23px;line-height:23px;letter-spacing:0.13px;">0.0</div>
<div class="a c l2" style="left:560px;top:800px;width:284px;height:22px;line-height:22px;letter-spacing:0.41px;">Amortization</div>
<div class="a c m" style="left:844px;top:800px;width:100px;height:22px;line-height:22px;letter-spacing:-0.13px;">US$ mm</div>
<div class="a c m" style="left:944px;top:800px;width:100px;height:22px;line-height:22px;letter-spacing:0.14px;">--</div>
<div class="a c nr p g" style="left:1126px;top:800px;width:82px;height:22px;line-height:22px;letter-spacing:0.13px;">0.0</div>
<div class="a c nr g" style="left:1208px;top:800px;width:82px;height:22px;line-height:22px;letter-spacing:0.12px;">(300.3)</div>
<div class="a c nr g" style="left:1290px;top:800px;width:83px;height:22px;line-height:22px;letter-spacing:0.12px;">(300.3)</div>
<div class="a c nr g" style="left:1373px;top:800px;width:83px;height:22px;line-height:22px;letter-spacing:0.12px;">(300.3)</div>
<div class="a c nr g" style="left:1456px;top:800px;width:82px;height:22px;line-height:22px;letter-spacing:0.12px;">(300.3)</div>
<div class="a c l2" style="left:560px;top:822px;width:284px;height:22px;line-height:22px;letter-spacing:0.19px;">Balloon</div>
<div class="a c m" style="left:844px;top:822px;width:100px;height:22px;line-height:22px;letter-spacing:-0.13px;">US$ mm</div>
<div class="a c m" style="left:944px;top:822px;width:100px;height:22px;line-height:22px;letter-spacing:0.14px;">--</div>
<div class="a c nr p g" style="left:1126px;top:822px;width:82px;height:22px;line-height:22px;letter-spacing:0.13px;">0.0</div>
<div class="a c nr p g" style="left:1208px;top:822px;width:82px;height:22px;line-height:22px;letter-spacing:0.13px;">0.0</div>
<div class="a c nr p g" style="left:1290px;top:822px;width:83px;height:22px;line-height:22px;letter-spacing:0.13px;">0.0</div>
<div class="a c nr p g" style="left:1373px;top:822px;width:83px;height:22px;line-height:22px;letter-spacing:0.13px;">0.0</div>
<div class="a c nr p g" style="left:1456px;top:822px;width:82px;height:22px;line-height:22px;letter-spacing:0.13px;">0.0</div>
<div class="a c l2" style="left:560px;top:844px;width:284px;height:22px;line-height:22px;letter-spacing:0.18px;">Interests</div>
<div class="a c m" style="left:844px;top:844px;width:100px;height:22px;line-height:22px;letter-spacing:-0.13px;">US$ mm</div>
<div class="a c m b" style="left:944px;top:844px;width:100px;height:22px;line-height:22px;letter-spacing:0.14px;">--</div>
<div class="a c nr g" style="left:1126px;top:844px;width:82px;height:22px;line-height:22px;letter-spacing:0.12px;">(540.5)</div>
<div class="a c nr g" style="left:1208px;top:844px;width:82px;height:22px;line-height:22px;letter-spacing:0.12px;">(522.5)</div>
<div class="a c nr g" style="left:1290px;top:844px;width:83px;height:22px;line-height:22px;letter-spacing:0.12px;">(486.4)</div>
<div class="a c nr g" style="left:1373px;top:844px;width:83px;height:22px;line-height:22px;letter-spacing:0.12px;">(450.4)</div>
<div class="a c nr g" style="left:1456px;top:844px;width:82px;height:22px;line-height:22px;letter-spacing:0.12px;">(414.4)</div>
<div class="a c l2" style="left:560px;top:866px;width:284px;height:26px;line-height:26px;letter-spacing:-0.15px;">Purchase Price</div>
<div class="a c m" style="left:844px;top:866px;width:100px;height:26px;line-height:26px;letter-spacing:-0.13px;">US$ mm</div>
<div class="a c m" style="left:944px;top:866px;width:100px;height:26px;line-height:26px;letter-spacing:0.14px;">--</div>
<div class="a c nr g" style="left:1044px;top:866px;width:82px;height:26px;line-height:26px;letter-spacing:0.23px;">(11,060.2)</div>
<div class="a c l2" style="left:560px;top:892px;width:284px;height:23px;line-height:23px;letter-spacing:-0.15px;">Transaction Expenses</div>
<div class="a c m" style="left:844px;top:892px;width:100px;height:23px;line-height:23px;letter-spacing:-0.13px;">US$ mm</div>
<div class="a c m" style="left:944px;top:892px;width:100px;height:23px;line-height:23px;letter-spacing:0.14px;">--</div>
<div class="a c nr g" style="left:1044px;top:892px;width:82px;height:23px;line-height:23px;letter-spacing:0.12px;">(331.8)</div>
<div class="a c l2" style="left:560px;top:915px;width:284px;height:22px;line-height:22px;letter-spacing:-0.18px;">Financial Expenses</div>
<div class="a c m" style="left:844px;top:915px;width:100px;height:22px;line-height:22px;letter-spacing:-0.13px;">US$ mm</div>
<div class="a c m" style="left:944px;top:915px;width:100px;height:22px;line-height:22px;letter-spacing:0.14px;">--</div>
<div class="a c nr g" style="left:1044px;top:915px;width:82px;height:22px;line-height:22px;letter-spacing:0.12px;">(67.6)</div>
<div class="a c l2 b" style="left:560px;top:937px;width:284px;height:23px;line-height:23px;font-size:13px;letter-spacing:-0.51px;">FCFE</div>
<div class="a c m b" style="left:844px;top:937px;width:100px;height:23px;line-height:23px;letter-spacing:-0.26px;">US$ mm</div>
<div class="a c m" style="left:944px;top:937px;width:100px;height:23px;line-height:23px;letter-spacing:0.14px;">--</div>
<div class="a c nr b" style="left:1044px;top:937px;width:82px;height:23px;line-height:23px;letter-spacing:0.19px;">(6,955.5)</div>
<div class="a c nr p b" style="left:1126px;top:937px;width:82px;height:23px;line-height:23px;letter-spacing:0.19px;">649.6</div>
<div class="a c nr p b" style="left:1208px;top:937px;width:82px;height:23px;line-height:23px;letter-spacing:0.19px;">586.7</div>
<div class="a c nr p b" style="left:1290px;top:937px;width:83px;height:23px;line-height:23px;letter-spacing:0.19px;">870.8</div>
<div class="a c nr p b" style="left:1373px;top:937px;width:83px;height:23px;line-height:23px;letter-spacing:0.18px;">1,179.2</div>
<div class="a c nr p b" style="left:1456px;top:937px;width:82px;height:23px;line-height:23px;letter-spacing:0.18px;">1,524.4</div>
<div class="a" style="left:560px;top:937px;width:1143px;height:1px;background:#000;"></div>
<div class="a" style="left:561px;top:982px;width:1139px;height:22px;background:#e6e6e6;"></div>
<div class="a c l2 b" style="left:560px;top:982px;width:284px;height:22px;line-height:22px;letter-spacing:-0.17px;">Exit Valuation</div>
<div class="a c r b" style="left:1044px;top:982px;width:82px;height:22px;line-height:22px;letter-spacing:0.16px;">2023</div>
<div class="a c r b" style="left:1126px;top:982px;width:82px;height:22px;line-height:22px;letter-spacing:0.16px;">2024</div>
<div class="a c r b" style="left:1208px;top:982px;width:82px;height:22px;line-height:22px;letter-spacing:0.16px;">2025</div>
<div class="a c r b" style="left:1290px;top:982px;width:83px;height:22px;line-height:22px;letter-spacing:0.16px;">2026</div>
<div class="a c r b" style="left:1373px;top:982px;width:83px;height:22px;line-height:22px;letter-spacing:0.16px;">2027</div>
<div class="a c r b" style="left:1456px;top:982px;width:82px;height:22px;line-height:22px;letter-spacing:0.16px;">2028</div>
<div class="a c l2" style="left:560px;top:1004px;width:284px;height:22px;line-height:22px;font-size:14.3px;letter-spacing:-0.45px;">EBITDA</div>
<div class="a c m" style="left:844px;top:1004px;width:100px;height:22px;line-height:22px;letter-spacing:-0.13px;">US$ mm</div>
<div class="a c m" style="left:944px;top:1004px;width:100px;height:22px;line-height:22px;letter-spacing:0.14px;">--</div>
<div class="a c nr p g" style="left:1126px;top:1004px;width:82px;height:22px;line-height:22px;letter-spacing:0.12px;">1,896.3</div>
<div class="a c nr p g" style="left:1208px;top:1004px;width:82px;height:22px;line-height:22px;letter-spacing:0.12px;">2,233.4</div>
<div class="a c nr p g" style="left:1290px;top:1004px;width:83px;height:22px;line-height:22px;letter-spacing:0.12px;">2,598.5</div>
<div class="a c nr p g" style="left:1373px;top:1004px;width:83px;height:22px;line-height:22px;letter-spacing:0.12px;">2,996.0</div>
<div class="a c nr p g" style="left:1456px;top:1004px;width:82px;height:22px;line-height:22px;letter-spacing:0.12px;">3,445.9</div>
<div class="a c l2" style="left:560px;top:1026px;width:284px;height:23px;line-height:23px;letter-spacing:-0.45px;">FV / EBITDA</div>
<div class="a c m" style="left:844px;top:1026px;width:100px;height:23px;line-height:23px;letter-spacing:-0.13px;">US$ mm</div>
<div class="a c m" style="left:944px;top:1026px;width:100px;height:23px;line-height:23px;letter-spacing:0.14px;">--</div>
<div class="a c nr p g" style="left:1126px;top:1026px;width:82px;height:23px;line-height:23px;letter-spacing:0.13px;">7.5</div>
<div class="a c nr p g" style="left:1208px;top:1026px;width:82px;height:23px;line-height:23px;letter-spacing:0.13px;">7.5</div>
<div class="a c nr p g" style="left:1290px;top:1026px;width:83px;height:23px;line-height:23px;letter-spacing:0.13px;">7.5</div>
<div class="a c nr p g" style="left:1373px;top:1026px;width:83px;height:23px;line-height:23px;letter-spacing:0.13px;">7.5</div>
<div class="a c nr p g" style="left:1456px;top:1026px;width:82px;height:23px;line-height:23px;letter-spacing:0.13px;">7.5</div>
<div class="a c l2 b" style="left:560px;top:1049px;width:284px;height:22px;line-height:22px;letter-spacing:-0.18px;">Firm Value</div>
<div class="a c m b" style="left:844px;top:1049px;width:100px;height:22px;line-height:22px;letter-spacing:-0.26px;">US$ mm</div>
<div class="a c m" style="left:944px;top:1049px;width:100px;height:22px;line-height:22px;letter-spacing:0.14px;">--</div>
<div class="a c nr p b" style="left:1126px;top:1049px;width:82px;height:22px;line-height:22px;letter-spacing:0.18px;">14,222.2</div>
<div class="a c nr p b" style="left:1208px;top:1049px;width:82px;height:22px;line-height:22px;letter-spacing:0.18px;">16,750.5</div>
<div class="a c nr p b" style="left:1290px;top:1049px;width:83px;height:22px;line-height:22px;letter-spacing:0.18px;">19,489.0</div>
<div class="a c nr p b" style="left:1373px;top:1049px;width:83px;height:22px;line-height:22px;letter-spacing:0.18px;">22,470.0</div>
<div class="a c nr p b" style="left:1456px;top:1049px;width:82px;height:22px;line-height:22px;letter-spacing:0.18px;">25,844.0</div>
<div class="a c l2" style="left:560px;top:1071px;width:284px;height:23px;line-height:23px;letter-spacing:0.33px;">Debt</div>
<div class="a c m" style="left:844px;top:1071px;width:100px;height:23px;line-height:23px;letter-spacing:-0.13px;">US$ mm</div>
<div class="a c m" style="left:944px;top:1071px;width:100px;height:23px;line-height:23px;letter-spacing:0.14px;">--</div>
<div class="a c nr g" style="left:1126px;top:1071px;width:82px;height:23px;line-height:23px;letter-spacing:0.12px;">(4,504.1)</div>
<div class="a c nr g" style="left:1208px;top:1071px;width:82px;height:23px;line-height:23px;letter-spacing:0.12px;">(4,203.8)</div>
<div class="a c nr g" style="left:1290px;top:1071px;width:83px;height:23px;line-height:23px;letter-spacing:0.12px;">(3,903.5)</div>
<div class="a c nr g" style="left:1373px;top:1071px;width:83px;height:23px;line-height:23px;letter-spacing:0.12px;">(3,603.3)</div>
<div class="a c nr g" style="left:1456px;top:1071px;width:82px;height:23px;line-height:23px;letter-spacing:0.12px;">(3,303.0)</div>
<div class="a c l2" style="left:560px;top:1094px;width:284px;height:22px;line-height:22px;font-size:14.3px;letter-spacing:-0.45px;">Excess Cash</div>
<div class="a c m" style="left:844px;top:1094px;width:100px;height:22px;line-height:22px;letter-spacing:-0.13px;">US$ mm</div>
<div class="a c m" style="left:944px;top:1094px;width:100px;height:22px;line-height:22px;letter-spacing:0.14px;">--</div>
<div class="a c nr p g" style="left:1126px;top:1094px;width:82px;height:22px;line-height:22px;letter-spacing:0.14px;">396.2</div>
<div class="a c nr p g" style="left:1208px;top:1094px;width:82px;height:22px;line-height:22px;letter-spacing:0.14px;">459.4</div>
<div class="a c nr p g" style="left:1290px;top:1094px;width:83px;height:22px;line-height:22px;letter-spacing:0.14px;">529.1</div>
<div class="a c nr p g" style="left:1373px;top:1094px;width:83px;height:22px;line-height:22px;letter-spacing:0.14px;">605.6</div>
<div class="a c nr p g" style="left:1456px;top:1094px;width:82px;height:22px;line-height:22px;letter-spacing:0.14px;">690.8</div>
<div class="a c l2 b" style="left:560px;top:1116px;width:284px;height:22px;line-height:22px;letter-spacing:-0.23px;">Equity Value</div>
<div class="a c m b" style="left:844px;top:1116px;width:100px;height:22px;line-height:22px;letter-spacing:-0.26px;">US$ mm</div>
<div class="a c m b" style="left:944px;top:1116px;width:100px;height:22px;line-height:22px;letter-spacing:0.14px;">--</div>
<div class="a c nr p b" style="left:1126px;top:1116px;width:82px;height:22px;line-height:22px;letter-spacing:0.28px;">10,114.3</div>
<div class="a c nr p b" style="left:1208px;top:1116px;width:82px;height:22px;line-height:22px;letter-spacing:0.18px;">13,006.0</div>
<div class="a c nr p b" style="left:1290px;top:1116px;width:83px;height:22px;line-height:22px;letter-spacing:0.28px;">16,114.6</div>
<div class="a c nr p b" style="left:1373px;top:1116px;width:83px;height:22px;line-height:22px;letter-spacing:0.18px;">19,472.3</div>
<div class="a c nr p b" style="left:1456px;top:1116px;width:82px;height:22px;line-height:22px;letter-spacing:0.18px;">23,231.8</div>
<div class="a c l2" style="left:560px;top:1138px;width:284px;height:27px;line-height:27px;letter-spacing:-0.24px;">Exit Costs</div>
<div class="a c m" style="left:844px;top:1138px;width:100px;height:27px;line-height:27px;letter-spacing:-0.13px;">US$ mm</div>
<div class="a c m" style="left:944px;top:1138px;width:100px;height:27px;line-height:27px;letter-spacing:0.14px;">--</div>
<div class="a c nr g" style="left:1126px;top:1138px;width:82px;height:27px;line-height:27px;letter-spacing:0.12px;">(303.4)</div>
<div class="a c nr g" style="left:1208px;top:1138px;width:82px;height:27px;line-height:27px;letter-spacing:0.12px;">(390.2)</div>
<div class="a c nr g" style="left:1290px;top:1138px;width:83px;height:27px;line-height:27px;letter-spacing:0.12px;">(483.4)</div>
<div class="a c nr g" style="left:1373px;top:1138px;width:83px;height:27px;line-height:27px;letter-spacing:0.12px;">(584.2)</div>
<div class="a c nr g" style="left:1456px;top:1138px;width:82px;height:27px;line-height:27px;letter-spacing:0.12px;">(697.0)</div>
<div class="a c l2" style="left:560px;top:1165px;width:284px;height:22px;line-height:22px;letter-spacing:0.20px;">EqV before Mgmt Warrants</div>
<div class="a c m" style="left:844px;top:1165px;width:100px;height:22px;line-height:22px;letter-spacing:-0.13px;">US$ mm</div>
<div class="a c m" style="left:944px;top:1165px;width:100px;height:22px;line-height:22px;letter-spacing:0.14px;">--</div>
<div class="a c nr p g" style="left:1126px;top:1165px;width:82px;height:22px;line-height:22px;letter-spacing:0.12px;">9,810.8</div>
<div class="a c nr p g" style="left:1208px;top:1165px;width:82px;height:22px;line-height:22px;letter-spacing:0.13px;">12,615.9</div>
<div class="a c nr p g" style="left:1290px;top:1165px;width:83px;height:22px;line-height:22px;letter-spacing:0.13px;">15,631.2</div>
<div class="a c nr p g" style="left:1373px;top:1165px;width:83px;height:22px;line-height:22px;letter-spacing:0.13px;">18,888.1</div>
<div class="a c nr p g" style="left:1456px;top:1165px;width:82px;height:22px;line-height:22px;letter-spacing:0.13px;">22,534.8</div>
<div class="a c l2" style="left:560px;top:1187px;width:284px;height:22px;line-height:22px;letter-spacing:0.42px;">Mgmt Warrants</div>
<div class="a c m" style="left:844px;top:1187px;width:100px;height:22px;line-height:22px;letter-spacing:-0.13px;">US$ mm</div>
<div class="a c m b" style="left:944px;top:1187px;width:100px;height:22px;line-height:22px;letter-spacing:0.14px;">--</div>
<div class="a c nr g" style="left:1126px;top:1187px;width:82px;height:22px;line-height:22px;letter-spacing:0.12px;">(294.3)</div>
<div class="a c nr g" style="left:1208px;top:1187px;width:82px;height:22px;line-height:22px;letter-spacing:0.12px;">(378.5)</div>
<div class="a c nr g" style="left:1290px;top:1187px;width:83px;height:22px;line-height:22px;letter-spacing:0.12px;">(468.9)</div>
<div class="a c nr g" style="left:1373px;top:1187px;width:83px;height:22px;line-height:22px;letter-spacing:0.12px;">(566.6)</div>
<div class="a c nr g" style="left:1456px;top:1187px;width:82px;height:22px;line-height:22px;letter-spacing:0.12px;">(676.0)</div>
<div class="a c l2 b" style="left:560px;top:1209px;width:284px;height:22px;line-height:22px;letter-spacing:-0.13px;">Post-MW Equity Value</div>
<div class="a c m b" style="left:844px;top:1209px;width:100px;height:22px;line-height:22px;letter-spacing:-0.26px;">US$ mm</div>
<div class="a c m b" style="left:944px;top:1209px;width:100px;height:22px;line-height:22px;letter-spacing:0.14px;">--</div>
<div class="a c nr p b" style="left:1126px;top:1209px;width:82px;height:22px;line-height:22px;letter-spacing:0.18px;">19,327.3</div>
<div class="a c nr p b" style="left:1208px;top:1209px;width:82px;height:22px;line-height:22px;letter-spacing:0.18px;">24,853.2</div>
<div class="a c nr p b" style="left:1290px;top:1209px;width:83px;height:22px;line-height:22px;letter-spacing:0.18px;">30,793.4</div>
<div class="a c nr p b" style="left:1373px;top:1209px;width:83px;height:22px;line-height:22px;letter-spacing:0.18px;">37,209.6</div>
<div class="a c nr p b" style="left:1456px;top:1209px;width:82px;height:22px;line-height:22px;letter-spacing:0.18px;">44,393.6</div>
<div class="a c l2" style="left:560px;top:1231px;width:284px;height:23px;line-height:23px;letter-spacing:-0.44px;">ABF's Stake</div>
<div class="a c m" style="left:844px;top:1231px;width:100px;height:23px;line-height:23px;letter-spacing:-0.13px;">US$ mm</div>
<div class="a c m" style="left:944px;top:1231px;width:100px;height:23px;line-height:23px;letter-spacing:0.14px;">--</div>
<div class="a c r g" style="left:1126px;top:1231px;width:82px;height:23px;line-height:23px;letter-spacing:-0.11px;">100.0%</div>
<div class="a c r g" style="left:1208px;top:1231px;width:82px;height:23px;line-height:23px;letter-spacing:-0.11px;">100.0%</div>
<div class="a c r g" style="left:1290px;top:1231px;width:83px;height:23px;line-height:23px;letter-spacing:-0.11px;">100.0%</div>
<div class="a c r g" style="left:1373px;top:1231px;width:83px;height:23px;line-height:23px;letter-spacing:-0.11px;">100.0%</div>
<div class="a c r g" style="left:1456px;top:1231px;width:82px;height:23px;line-height:23px;letter-spacing:-0.11px;">100.0%</div>
<div class="a c l2" style="left:560px;top:1254px;width:284px;height:22px;line-height:22px;letter-spacing:-0.20px;">ABF's Exit Value</div>
<div class="a c m" style="left:844px;top:1254px;width:100px;height:22px;line-height:22px;letter-spacing:-0.13px;">US$ mm</div>
<div class="a c m" style="left:944px;top:1254px;width:100px;height:22px;line-height:22px;letter-spacing:0.14px;">--</div>
<div class="a c nr p g" style="left:1126px;top:1254px;width:82px;height:22px;line-height:22px;letter-spacing:0.12px;">9,516.5</div>
<div class="a c nr p g" style="left:1208px;top:1254px;width:82px;height:22px;line-height:22px;letter-spacing:0.13px;">12,237.4</div>
<div class="a c nr p g" style="left:1290px;top:1254px;width:83px;height:22px;line-height:22px;letter-spacing:0.13px;">15,162.2</div>
<div class="a c nr p g" style="left:1373px;top:1254px;width:83px;height:22px;line-height:22px;letter-spacing:0.13px;">18,321.5</div>
<div class="a c nr p g" style="left:1456px;top:1254px;width:82px;height:22px;line-height:22px;letter-spacing:0.13px;">21,858.8</div>
<div class="a c l2" style="left:560px;top:1276px;width:284px;height:22px;line-height:22px;letter-spacing:-0.12px;">Capital Gain Tax</div>
<div class="a c m" style="left:844px;top:1276px;width:100px;height:22px;line-height:22px;letter-spacing:-0.13px;">US$ mm</div>
<div class="a c m" style="left:944px;top:1276px;width:100px;height:22px;line-height:22px;letter-spacing:0.14px;">--</div>
<div class="a c nr p g" style="left:1126px;top:1276px;width:82px;height:22px;line-height:22px;letter-spacing:0.13px;">0.0</div>
<div class="a c nr g" style="left:1208px;top:1276px;width:82px;height:22px;line-height:22px;letter-spacing:0.12px;">(412.0)</div>
<div class="a c nr g" style="left:1290px;top:1276px;width:83px;height:22px;line-height:22px;letter-spacing:0.12px;">(1,435.7)</div>
<div class="a c nr g" style="left:1373px;top:1276px;width:83px;height:22px;line-height:22px;letter-spacing:0.12px;">(2,541.4)</div>
<div class="a c nr g" style="left:1456px;top:1276px;width:82px;height:22px;line-height:22px;letter-spacing:0.12px;">(3,779.5)</div>
<div class="a c l2 b" style="left:560px;top:1298px;width:284px;height:23px;line-height:23px;letter-spacing:-0.34px;">ABF's Exit Value, net</div>
<div class="a c m b" style="left:844px;top:1298px;width:100px;height:23px;line-height:23px;letter-spacing:-0.26px;">US$ mm</div>
<div class="a c m b" style="left:944px;top:1298px;width:100px;height:23px;line-height:23px;letter-spacing:0.14px;">--</div>
<div class="a c nr p b" style="left:1126px;top:1298px;width:82px;height:23px;line-height:23px;letter-spacing:0.18px;">9,516.5</div>
<div class="a c nr p b" style="left:1208px;top:1298px;width:82px;height:23px;line-height:23px;letter-spacing:0.28px;">11,825.4</div>
<div class="a c nr p b" style="left:1290px;top:1298px;width:83px;height:23px;line-height:23px;letter-spacing:0.18px;">13,726.5</div>
<div class="a c nr p b" style="left:1373px;top:1298px;width:83px;height:23px;line-height:23px;letter-spacing:0.18px;">15,780.0</div>
<div class="a c nr p b" style="left:1456px;top:1298px;width:82px;height:23px;line-height:23px;letter-spacing:0.18px;">18,079.3</div>
<div class="a" style="left:560px;top:1048px;width:1143px;height:1px;background:#000;"></div>
<div class="a" style="left:560px;top:1115px;width:1143px;height:1px;background:#000;"></div>
<div class="a" style="left:560px;top:1208px;width:1143px;height:1px;background:#000;"></div>
<div class="a" style="left:560px;top:1298px;width:1143px;height:1px;background:#000;"></div>
<div class="a" style="left:560px;top:1344px;width:1143px;height:21px;background:#073c6e;"></div>
<div class="a" style="left:560px;top:1365px;width:1143px;height:26px;background:#70aad0;"></div>
<div class="a c l2 b w" style="left:560px;top:1344px;width:284px;height:21px;line-height:21px;letter-spacing:-0.27px;">MOIC Bridge</div>
<div class="a c m b u" style="left:844px;top:1365px;width:100px;height:26px;line-height:26px;letter-spacing:0.18px;">Unit</div>
<div class="a c m b u" style="left:944px;top:1365px;width:100px;height:26px;line-height:26px;letter-spacing:0.28px;">Metric</div>
<div class="a c m b u" style="left:1126px;top:1365px;width:82px;height:26px;line-height:26px;letter-spacing:-0.23px;">2023E</div>
<div class="a c m b u" style="left:1208px;top:1365px;width:82px;height:26px;line-height:26px;letter-spacing:-0.23px;">2028E</div>
<div class="a c m b u" style="left:1620px;top:1365px;width:83px;height:26px;line-height:26px;letter-spacing:0.05px;">MOIC</div>
<div class="a c nc p b u" style="left:1373px;top:1365px;width:83px;height:26px;line-height:26px;letter-spacing:-0.07px;">Value</div>
<div class="a c nc p b u" style="left:1373px;top:1391px;width:83px;height:27px;line-height:27px;letter-spacing:-0.14px;">(US$ mm)</div>
<div class="a" style="left:1620px;top:1391px;width:81px;height:28px;background:#f4e8d5;"></div>
<div class="a" style="left:1620px;top:1756px;width:81px;height:23px;background:#f4e8d5;"></div>
<div class="a c m bl" style="left:1620px;top:1391px;width:83px;height:27px;line-height:27px;letter-spacing:0.06px;">1.00x</div>
<div class="a c l2" style="left:560px;top:1418px;width:284px;height:22px;line-height:22px;letter-spacing:0.10px;">Revenue Growth</div>
<div class="a c m" style="left:844px;top:1418px;width:100px;height:22px;line-height:22px;letter-spacing:-0.13px;">US$ mm</div>
<div class="a c m" style="left:944px;top:1418px;width:100px;height:22px;line-height:22px;letter-spacing:0.14px;">--</div>
<div class="a c nc p g" style="left:1126px;top:1418px;width:82px;height:22px;line-height:22px;letter-spacing:0.12px;">6,600.8</div>
<div class="a c nc p g" style="left:1208px;top:1418px;width:82px;height:22px;line-height:22px;letter-spacing:0.13px;">13,815.3</div>
<div class="a c nc p" style="left:1373px;top:1418px;width:83px;height:22px;line-height:22px;letter-spacing:0.13px;">12,307.1</div>
<div class="a c m" style="left:1620px;top:1418px;width:83px;height:22px;line-height:22px;letter-spacing:0.06px;">1.77x</div>
<div class="a c l2" style="left:560px;top:1440px;width:284px;height:22px;line-height:22px;letter-spacing:0.09px;">Margin Expansion</div>
<div class="a c m" style="left:844px;top:1440px;width:100px;height:22px;line-height:22px;letter-spacing:-0.31px;">% of Rev.</div>
<div class="a c m" style="left:944px;top:1440px;width:100px;height:22px;line-height:22px;letter-spacing:0.14px;">--</div>
<div class="a c m g" style="left:1126px;top:1440px;width:82px;height:22px;line-height:22px;letter-spacing:-0.16px;">22.7%</div>
<div class="a c m g" style="left:1208px;top:1440px;width:82px;height:22px;line-height:22px;letter-spacing:-0.16px;">24.9%</div>
<div class="a c nc p" style="left:1373px;top:1440px;width:83px;height:22px;line-height:22px;letter-spacing:0.12px;">2,276.7</div>
<div class="a c m" style="left:1620px;top:1440px;width:83px;height:22px;line-height:22px;letter-spacing:0.06px;">0.33x</div>
<div class="a c l2 b" style="left:560px;top:1462px;width:284px;height:22px;line-height:22px;font-size:14.2px;letter-spacing:-0.45px;">EBITDA</div>
<div class="a c m b" style="left:844px;top:1462px;width:100px;height:22px;line-height:22px;letter-spacing:-0.26px;">US$ mm</div>
<div class="a c m b" style="left:944px;top:1462px;width:100px;height:22px;line-height:22px;letter-spacing:0.14px;">--</div>
<div class="a c nc p b" style="left:1126px;top:1462px;width:82px;height:22px;line-height:22px;letter-spacing:0.18px;">1,501.4</div>
<div class="a c nc p b" style="left:1208px;top:1462px;width:82px;height:22px;line-height:22px;letter-spacing:0.18px;">3,445.9</div>
<div class="a c nc p b" style="left:1373px;top:1462px;width:83px;height:22px;line-height:22px;letter-spacing:0.18px;">14,583.8</div>
<div class="a c m b" style="left:1620px;top:1462px;width:83px;height:22px;line-height:22px;letter-spacing:0.03px;">2.10x</div>
<div class="a c l2" style="left:560px;top:1484px;width:284px;height:23px;line-height:23px;font-size:15.3px;letter-spacing:0.50px;">Multiple</div>
<div class="a c m" style="left:844px;top:1484px;width:100px;height:23px;line-height:23px;letter-spacing:-0.23px;">x</div>
<div class="a c m" style="left:944px;top:1484px;width:100px;height:23px;line-height:23px;letter-spacing:0.14px;">--</div>
<div class="a c m" style="left:1126px;top:1484px;width:82px;height:23px;line-height:23px;letter-spacing:0.04px;">7.5x</div>
<div class="a c m" style="left:1208px;top:1484px;width:82px;height:23px;line-height:23px;letter-spacing:0.04px;">7.5x</div>
<div class="a c nc p" style="left:1373px;top:1484px;width:83px;height:23px;line-height:23px;letter-spacing:0.13px;">0.0</div>
<div class="a c m" style="left:1620px;top:1484px;width:83px;height:23px;line-height:23px;letter-spacing:0.06px;">0.00x</div>
<div class="a c l2 b" style="left:560px;top:1507px;width:284px;height:22px;line-height:22px;letter-spacing:-0.18px;">Firm Value</div>
<div class="a c m b" style="left:844px;top:1507px;width:100px;height:22px;line-height:22px;letter-spacing:-0.26px;">US$ mm</div>
<div class="a c m b" style="left:944px;top:1507px;width:100px;height:22px;line-height:22px;letter-spacing:0.14px;">--</div>
<div class="a c nc p b" style="left:1126px;top:1507px;width:82px;height:22px;line-height:22px;letter-spacing:0.28px;">11,260.2</div>
<div class="a c nc p b" style="left:1208px;top:1507px;width:82px;height:22px;line-height:22px;letter-spacing:0.18px;">25,844.0</div>
<div class="a c nc p b" style="left:1373px;top:1507px;width:83px;height:22px;line-height:22px;letter-spacing:0.18px;">14,583.8</div>
<div class="a c m b" style="left:1620px;top:1507px;width:83px;height:22px;line-height:22px;letter-spacing:0.03px;">2.10x</div>
<div class="a c l2" style="left:560px;top:1529px;width:284px;height:22px;line-height:22px;letter-spacing:0.33px;">Debt</div>
<div class="a c m" style="left:844px;top:1529px;width:100px;height:22px;line-height:22px;letter-spacing:-0.13px;">US$ mm</div>
<div class="a c m" style="left:944px;top:1529px;width:100px;height:22px;line-height:22px;letter-spacing:0.14px;">--</div>
<div class="a c nc" style="left:1126px;top:1529px;width:82px;height:22px;line-height:22px;letter-spacing:0.12px;">(4,804.1)</div>
<div class="a c nc" style="left:1208px;top:1529px;width:82px;height:22px;line-height:22px;letter-spacing:0.12px;">(3,303.0)</div>
<div class="a c nc p" style="left:1373px;top:1529px;width:83px;height:22px;line-height:22px;letter-spacing:0.12px;">1,501.1</div>
<div class="a c m" style="left:1620px;top:1529px;width:83px;height:22px;line-height:22px;letter-spacing:0.06px;">0.22x</div>
<div class="a c l2" style="left:560px;top:1551px;width:284px;height:22px;line-height:22px;font-size:14.4px;letter-spacing:-0.45px;">Cash</div>
<div class="a c m" style="left:844px;top:1551px;width:100px;height:22px;line-height:22px;letter-spacing:-0.13px;">US$ mm</div>
<div class="a c m" style="left:944px;top:1551px;width:100px;height:22px;line-height:22px;letter-spacing:0.14px;">--</div>
<div class="a c nc p" style="left:1126px;top:1551px;width:82px;height:22px;line-height:22px;letter-spacing:0.14px;">100.0</div>
<div class="a c nc p" style="left:1208px;top:1551px;width:82px;height:22px;line-height:22px;letter-spacing:0.14px;">690.8</div>
<div class="a c nc p" style="left:1373px;top:1551px;width:83px;height:22px;line-height:22px;letter-spacing:0.14px;">590.8</div>
<div class="a c m" style="left:1620px;top:1551px;width:83px;height:22px;line-height:22px;letter-spacing:0.06px;">0.08x</div>
<div class="a c l2 b" style="left:560px;top:1573px;width:284px;height:27px;line-height:27px;letter-spacing:-0.23px;">Equity Value</div>
<div class="a c m b" style="left:844px;top:1573px;width:100px;height:27px;line-height:27px;letter-spacing:-0.26px;">US$ mm</div>
<div class="a c m b" style="left:944px;top:1573px;width:100px;height:27px;line-height:27px;letter-spacing:0.14px;">--</div>
<div class="a c nc p b" style="left:1126px;top:1573px;width:82px;height:27px;line-height:27px;letter-spacing:0.18px;">6,556.1</div>
<div class="a c nc p b" style="left:1208px;top:1573px;width:82px;height:27px;line-height:27px;letter-spacing:0.18px;">23,231.8</div>
<div class="a c nc p b" style="left:1373px;top:1573px;width:83px;height:27px;line-height:27px;letter-spacing:0.18px;">16,675.6</div>
<div class="a c m b" style="left:1620px;top:1573px;width:83px;height:27px;line-height:27px;letter-spacing:0.03px;">2.40x</div>
<div class="a c l2" style="left:560px;top:1600px;width:284px;height:22px;line-height:22px;letter-spacing:0.13px;">Entry/Exit costs</div>
<div class="a c m" style="left:844px;top:1600px;width:100px;height:22px;line-height:22px;letter-spacing:-0.13px;">US$ mm</div>
<div class="a c m" style="left:944px;top:1600px;width:100px;height:22px;line-height:22px;letter-spacing:0.14px;">--</div>
<div class="a c nc p" style="left:1126px;top:1600px;width:82px;height:22px;line-height:22px;letter-spacing:0.14px;">399.4</div>
<div class="a c nc" style="left:1208px;top:1600px;width:82px;height:22px;line-height:22px;letter-spacing:0.12px;">(697.0)</div>
<div class="a c nc" style="left:1373px;top:1600px;width:83px;height:22px;line-height:22px;letter-spacing:0.12px;">(1,096.3)</div>
<div class="a c m" style="left:1620px;top:1600px;width:83px;height:22px;line-height:22px;letter-spacing:0.07px;">-0.16x</div>
<div class="a c l2" style="left:560px;top:1622px;width:284px;height:23px;line-height:23px;letter-spacing:0.42px;">Mgmt Warrants</div>
<div class="a c m" style="left:844px;top:1622px;width:100px;height:23px;line-height:23px;letter-spacing:-0.13px;">US$ mm</div>
<div class="a c m" style="left:944px;top:1622px;width:100px;height:23px;line-height:23px;letter-spacing:0.14px;">--</div>
<div class="a c nc" style="left:1208px;top:1622px;width:82px;height:23px;line-height:23px;letter-spacing:0.12px;">(676.0)</div>
<div class="a c nc" style="left:1373px;top:1622px;width:83px;height:23px;line-height:23px;letter-spacing:0.12px;">(676.0)</div>
<div class="a c m" style="left:1620px;top:1622px;width:83px;height:23px;line-height:23px;letter-spacing:0.07px;">-0.10x</div>
<div class="a c l2 b" style="left:560px;top:1645px;width:284px;height:22px;line-height:22px;letter-spacing:-0.21px;">Equity Value (@ Stake)</div>
<div class="a c m b" style="left:844px;top:1645px;width:100px;height:22px;line-height:22px;letter-spacing:-0.26px;">US$ mm</div>
<div class="a c m b" style="left:944px;top:1645px;width:100px;height:22px;line-height:22px;letter-spacing:0.14px;">--</div>
<div class="a c nc p b" style="left:1126px;top:1645px;width:82px;height:22px;line-height:22px;letter-spacing:0.18px;">6,955.5</div>
<div class="a c nc p b" style="left:1208px;top:1645px;width:82px;height:22px;line-height:22px;letter-spacing:0.18px;">21,858.8</div>
<div class="a c nc p b" style="left:1373px;top:1645px;width:83px;height:22px;line-height:22px;letter-spacing:0.18px;">14,903.3</div>
<div class="a c m b" style="left:1620px;top:1645px;width:83px;height:22px;line-height:22px;letter-spacing:0.03px;">2.14x</div>
<div class="a c l2" style="left:560px;top:1667px;width:284px;height:22px;line-height:22px;letter-spacing:-0.18px;">Capital Gain Taxes</div>
<div class="a c m" style="left:844px;top:1667px;width:100px;height:22px;line-height:22px;letter-spacing:-0.13px;">US$ mm</div>
<div class="a c m" style="left:944px;top:1667px;width:100px;height:22px;line-height:22px;letter-spacing:0.14px;">--</div>
<div class="a c nc" style="left:1208px;top:1667px;width:82px;height:22px;line-height:22px;letter-spacing:0.12px;">(3,779.5)</div>
<div class="a c nc" style="left:1373px;top:1667px;width:83px;height:22px;line-height:22px;letter-spacing:0.12px;">(3,779.5)</div>
<div class="a c m" style="left:1620px;top:1667px;width:83px;height:22px;line-height:22px;letter-spacing:0.07px;">-0.54x</div>
<div class="a c l2 b" style="left:560px;top:1689px;width:284px;height:23px;line-height:23px;letter-spacing:-0.06px;">Entry/Exit Value</div>
<div class="a c m b" style="left:844px;top:1689px;width:100px;height:23px;line-height:23px;letter-spacing:-0.26px;">US$ mm</div>
<div class="a c m b" style="left:944px;top:1689px;width:100px;height:23px;line-height:23px;letter-spacing:0.14px;">--</div>
<div class="a c nc p b" style="left:1126px;top:1689px;width:82px;height:23px;line-height:23px;letter-spacing:0.18px;">6,955.5</div>
<div class="a c nc p b" style="left:1208px;top:1689px;width:82px;height:23px;line-height:23px;letter-spacing:0.18px;">18,079.3</div>
<div class="a c nc p b" style="left:1373px;top:1689px;width:83px;height:23px;line-height:23px;letter-spacing:0.28px;">11,123.8</div>
<div class="a c m b" style="left:1620px;top:1689px;width:83px;height:23px;line-height:23px;letter-spacing:0.03px;">2.60x</div>
<div class="a c l2" style="left:560px;top:1712px;width:284px;height:22px;line-height:22px;letter-spacing:0.12px;">Dividends</div>
<div class="a c m" style="left:844px;top:1712px;width:100px;height:22px;line-height:22px;letter-spacing:-0.13px;">US$ mm</div>
<div class="a c m" style="left:944px;top:1712px;width:100px;height:22px;line-height:22px;letter-spacing:0.14px;">--</div>
<div class="a c nc p" style="left:1208px;top:1712px;width:82px;height:22px;line-height:22px;letter-spacing:0.12px;">4,810.6</div>
<div class="a c nc p" style="left:1373px;top:1712px;width:83px;height:22px;line-height:22px;letter-spacing:0.12px;">4,810.6</div>
<div class="a c m" style="left:1620px;top:1712px;width:83px;height:22px;line-height:22px;letter-spacing:0.06px;">0.69x</div>
<div class="a c l2 b" style="left:560px;top:1734px;width:284px;height:22px;line-height:22px;letter-spacing:0.05px;">MOIC</div>
<div class="a c m b" style="left:844px;top:1734px;width:100px;height:22px;line-height:22px;letter-spacing:-0.25px;">x Invest.</div>
<div class="a c m b" style="left:944px;top:1734px;width:100px;height:22px;line-height:22px;letter-spacing:0.14px;">--</div>
<div class="a c m b" style="left:1620px;top:1734px;width:83px;height:22px;line-height:22px;letter-spacing:0.03px;">3.29x</div>
<div class="a c l2 b" style="left:560px;top:1756px;width:284px;height:22px;line-height:22px;letter-spacing:0.04px;">MOIC w/o leverage</div>
<div class="a c m b" style="left:844px;top:1756px;width:100px;height:22px;line-height:22px;letter-spacing:-0.25px;">x Invest.</div>
<div class="a c m b" style="left:944px;top:1756px;width:100px;height:22px;line-height:22px;letter-spacing:0.14px;">--</div>
<div class="a c m bl" style="left:1620px;top:1756px;width:83px;height:22px;line-height:22px;letter-spacing:0.06px;">2.39x</div>
<div class="a c l2 b" style="left:560px;top:1778px;width:284px;height:23px;line-height:23px;font-size:14.7px;letter-spacing:-0.45px;">Leverage</div>
<div class="a c m b" style="left:844px;top:1778px;width:100px;height:23px;line-height:23px;letter-spacing:-0.25px;">x Invest.</div>
<div class="a c m b" style="left:944px;top:1778px;width:100px;height:23px;line-height:23px;letter-spacing:0.14px;">--</div>
<div class="a c m b" style="left:1620px;top:1778px;width:83px;height:23px;line-height:23px;letter-spacing:0.03px;">0.90x</div>
<div class="a" style="left:560px;top:1462px;width:1143px;height:1px;background:#000;"></div>
<div class="a" style="left:560px;top:1506px;width:1143px;height:1px;background:#000;"></div>
<div class="a" style="left:560px;top:1573px;width:1143px;height:1px;background:#000;"></div>
<div class="a" style="left:560px;top:1644px;width:1143px;height:1px;background:#000;"></div>
<div class="a" style="left:560px;top:1689px;width:1143px;height:1px;background:#000;"></div>
<div class="a" style="left:560px;top:1733px;width:1143px;height:1px;background:#000;"></div>
<div class="a tri-g" style="left:1373px;top:1484px;"></div>
<div class="a tri-g" style="left:1208px;top:1573px;"></div>
<div class="a tri-r" style="left:1695px;top:1756px;"></div>
<div class="a" style="left:53px;top:483px;width:485px;height:1px;background:#000;"></div>
<div class="a" style="left:53px;top:821px;width:485px;height:1px;background:#000;"></div>
<div class="a" style="left:53px;top:822px;width:486px;height:1px;background:rgba(0,0,0,.38);"></div>
<div class="a" style="left:53px;top:483px;width:1px;height:339px;background:#000;"></div>
<div class="a" style="left:537px;top:483px;width:1px;height:339px;background:#000;"></div>
<div class="a" style="left:538px;top:483px;width:1px;height:339px;background:rgba(0,0,0,.38);"></div>
<div class="a" style="left:53px;top:844px;width:485px;height:1px;background:#000;"></div>
<div class="a" style="left:53px;top:1093px;width:485px;height:1px;background:#000;"></div>
<div class="a" style="left:53px;top:1094px;width:486px;height:1px;background:rgba(0,0,0,.38);"></div>
<div class="a" style="left:53px;top:844px;width:1px;height:250px;background:#000;"></div>
<div class="a" style="left:537px;top:844px;width:1px;height:250px;background:#000;"></div>
<div class="a" style="left:538px;top:844px;width:1px;height:250px;background:rgba(0,0,0,.38);"></div>
<div class="a" style="left:53px;top:1115px;width:485px;height:1px;background:#000;"></div>
<div class="a" style="left:53px;top:1342px;width:485px;height:1px;background:#000;"></div>
<div class="a" style="left:53px;top:1343px;width:486px;height:1px;background:rgba(0,0,0,.38);"></div>
<div class="a" style="left:53px;top:1115px;width:1px;height:228px;background:#000;"></div>
<div class="a" style="left:537px;top:1115px;width:1px;height:228px;background:#000;"></div>
<div class="a" style="left:538px;top:1115px;width:1px;height:228px;background:rgba(0,0,0,.38);"></div>
<div class="a" style="left:53px;top:1365px;width:485px;height:1px;background:#000;"></div>
<div class="a" style="left:53px;top:1528px;width:485px;height:1px;background:#000;"></div>
<div class="a" style="left:53px;top:1529px;width:486px;height:1px;background:rgba(0,0,0,.38);"></div>
<div class="a" style="left:53px;top:1365px;width:1px;height:164px;background:#000;"></div>
<div class="a" style="left:537px;top:1365px;width:1px;height:164px;background:#000;"></div>
<div class="a" style="left:538px;top:1365px;width:1px;height:164px;background:rgba(0,0,0,.38);"></div>
<div class="a" style="left:53px;top:1551px;width:485px;height:1px;background:#000;"></div>
<div class="a" style="left:53px;top:1800px;width:485px;height:1px;background:#000;"></div>
<div class="a" style="left:53px;top:1801px;width:486px;height:1px;background:rgba(0,0,0,.38);"></div>
<div class="a" style="left:53px;top:1551px;width:1px;height:250px;background:#000;"></div>
<div class="a" style="left:537px;top:1551px;width:1px;height:250px;background:#000;"></div>
<div class="a" style="left:538px;top:1551px;width:1px;height:250px;background:rgba(0,0,0,.38);"></div>
<div class="a" style="left:559px;top:483px;width:1144px;height:1px;background:#000;"></div>
<div class="a" style="left:559px;top:1320px;width:1144px;height:1px;background:#000;"></div>
<div class="a" style="left:559px;top:1321px;width:1145px;height:1px;background:rgba(0,0,0,.38);"></div>
<div class="a" style="left:559px;top:483px;width:1px;height:838px;background:#000;"></div>
<div class="a" style="left:1702px;top:483px;width:1px;height:838px;background:#000;"></div>
<div class="a" style="left:1703px;top:483px;width:1px;height:838px;background:rgba(0,0,0,.38);"></div>
<div class="a" style="left:559px;top:1343px;width:1144px;height:1px;background:#000;"></div>
<div class="a" style="left:559px;top:1800px;width:1144px;height:1px;background:#000;"></div>
<div class="a" style="left:559px;top:1801px;width:1145px;height:1px;background:rgba(0,0,0,.38);"></div>
<div class="a" style="left:559px;top:1343px;width:1px;height:458px;background:#000;"></div>
<div class="a" style="left:1702px;top:1343px;width:1px;height:458px;background:#000;"></div>
<div class="a" style="left:1703px;top:1343px;width:1px;height:458px;background:rgba(0,0,0,.38);"></div>
<div class="a" style="left:30px;top:436px;width:26px;height:28px;border:3px solid #127a40;box-sizing:border-box;"></div>
<div class="a" style="left:33px;top:439px;width:20px;height:22px;border:1px solid rgba(255,255,255,.55);border-left:none;border-top:none;box-sizing:border-box;"></div>
<div class="a" style="left:48px;top:456px;width:10px;height:10px;background:#fff;"></div>
<div class="a" style="left:50px;top:458px;width:7px;height:7px;background:#1d7a45;"></div>
<div class="a" style="left:0px;top:1913px;width:1946px;height:62px;background:#f0f0f0;"></div><div class="a" style="left:0px;top:1912.5px;width:1946px;height:1px;background:#e0e0e0;"></div><div class="a" style="left:0px;top:1975px;width:1946px;height:29px;background:#f5f5f5;"></div><div class="a" style="left:0px;top:1975px;width:1946px;height:1px;background:#fbfbfb;"></div><svg class="a" style="left:38px;top:1930px" width="18" height="26" viewBox="0 0 18 26"><path d="M13 3.700L3.500 12.600l9.500 8.900" fill="none" stroke="#979797" stroke-width="1.900"/></svg><svg class="a" style="left:100px;top:1930px" width="18" height="26" viewBox="0 0 18 26"><path d="M4.500 3.700l9.500 8.900-9.500 8.900" fill="none" stroke="#808080" stroke-width="1.900"/></svg><div class="a" style="left:210px;top:1921px;width:102px;height:46px;background:#26577a;border-radius:8px;"></div><div class="t" style="left:224.7px;top:1933.4px;font-size:25.5px;line-height:25.5px;letter-spacing:0.65px;color:#fff;">Cover</div><div class="a" style="left:321px;top:1927px;width:1.5px;height:33px;background:#c8c8c8;"></div><div class="a" style="left:330px;top:1906px;width:124px;height:61.5px;background:#fff;border-radius:0 0 9px 9px;box-shadow:0 1px 2px rgba(0,0,0,.22);"></div><div class="a" style="left:322px;top:1913px;width:8px;height:8px;background:radial-gradient(circle at 0 100%,#f0f0f0 7px,#dcdcdc 7.5px,#dcdcdc 8px,#fff 8.500px);"></div><div class="a" style="left:454px;top:1913px;width:8px;height:8px;background:radial-gradient(circle at 100% 100%,#f0f0f0 7px,#dcdcdc 7.5px,#dcdcdc 8px,#fff 8.500px);"></div><div class="a" style="left:33px;top:1900px;width:1692px;height:13px;background:#fff;"></div><div class="t" style="left:344.0px;top:1928.4px;font-size:25.5px;line-height:25.5px;letter-spacing:0.68px;color:#1f1f1f;font-weight:bold;">Control</div><div class="a" style="left:345px;top:1957px;width:92.5px;height:3.5px;background:#107c41;"></div><div class="a" style="left:461px;top:1927px;width:1.5px;height:33px;background:#c8c8c8;"></div><div class="t" style="left:486.5px;top:1933.4px;font-size:25.5px;line-height:25.5px;letter-spacing:1.40px;color:#2b2b2b;">Build-Up</div><div class="a" style="left:619.5px;top:1927px;width:1.5px;height:33px;background:#c8c8c8;"></div><svg class="a" style="left:701px;top:1931px" width="24" height="24" viewBox="0 0 24 24"><path d="M12 1.500v21M1.500 12h21" stroke="#3b3b3b" stroke-width="1.800"/></svg><div class="t" style="left:12.3px;top:1987.2px;font-size:21px;line-height:21px;letter-spacing:-1.26px;color:#3b3b3b;">Ready</div><div class="t" style="left:139.0px;top:1987.2px;font-size:21px;line-height:21px;letter-spacing:-0.39px;color:#3b3b3b;">Accessibility: Investigate</div><svg class="a" style="left:103px;top:1980px" width="30" height="26" viewBox="0 0 30 26"><circle cx="13" cy="7" r="3.300" fill="none" stroke="#3b3b3b" stroke-width="1.700"/>
<path d="M2 10.500c7 3.500 15 3.500 22 0M9 15l-3.500 11M17 15l3 6M9 15c2.500-1 5.500-1 8 0" fill="none" stroke="#3b3b3b" stroke-width="1.700"/>
<path d="M17 24l3.500 3.500 7-8" fill="none" stroke="#3b3b3b" stroke-width="1.700"/></svg>
</div></body></html>
